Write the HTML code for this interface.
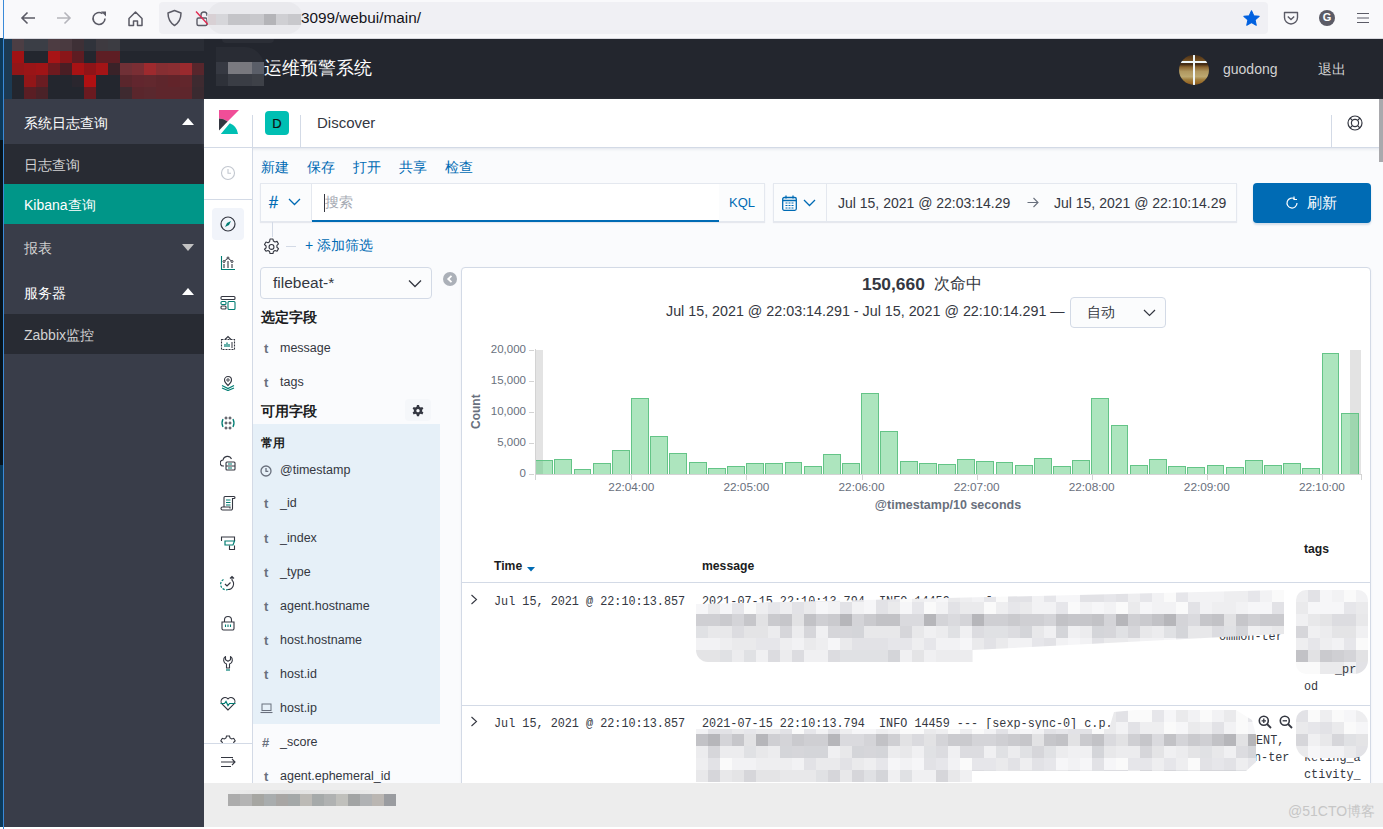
<!DOCTYPE html>
<html><head><meta charset="utf-8">
<style>
*{box-sizing:border-box;margin:0;padding:0}
html,body{width:1383px;height:829px;overflow:hidden;background:#fafbfd;font-family:"Liberation Sans",sans-serif;position:relative}
.a{position:absolute}
.t{position:absolute;white-space:pre;line-height:1}
/* browser bar */
#bb{left:0;top:0;width:1383px;height:39px;background:#f9f9fb;border-bottom:1px solid #d8d8de}
#url{left:159px;top:2px;width:1109px;height:32px;background:#f0f0f4;border-radius:4px}
/* header */
#hd{left:0;top:39px;width:1383px;height:60px;background:#23262e}
/* sidebar */
#sb{left:4px;top:99px;width:200px;height:730px;background:#393d49}
.si{position:absolute;left:0;width:200px;color:#fff;font-size:14px}
.si span{position:absolute;left:20px;top:50%;transform:translateY(calc(-50% + 1.5px));white-space:nowrap}
.caret{position:absolute;left:178px;width:0;height:0;border-left:6px solid transparent;border-right:6px solid transparent}
</style></head><body>
<div id="bb" class="a">
  <div id="url" class="a"></div>
  <svg class="a" style="left:19px;top:10px" width="18" height="16" viewBox="0 0 18 16"><path d="M16 8H3M8.5 2.5L3 8l5.5 5.5" fill="none" stroke="#5b5b66" stroke-width="1.6"/></svg>
  <svg class="a" style="left:55px;top:10px" width="18" height="16" viewBox="0 0 18 16"><path d="M2 8h13M9.5 2.5L15 8l-5.5 5.5" fill="none" stroke="#b5b5bb" stroke-width="1.6"/></svg>
  <svg class="a" style="left:91px;top:10px" width="17" height="17" viewBox="0 0 17 17"><path d="M14 8.5A6 6 0 1 1 11.5 3.6" fill="none" stroke="#5b5b66" stroke-width="1.6"/><path d="M10 1.5h5v5z" fill="#5b5b66"/></svg>
  <svg class="a" style="left:127px;top:10px" width="17" height="17" viewBox="0 0 17 17"><path d="M2 8.5L8.5 2 15 8.5V15.5H10.5V11H6.5V15.5H2z" fill="none" stroke="#5b5b66" stroke-width="1.5" stroke-linejoin="round"/></svg>
  <svg class="a" style="left:166px;top:9px" width="17" height="18" viewBox="0 0 17 18"><path d="M8.5 1.5L15 4c0 6-2.5 10-6.5 12.5C4.5 14 2 10 2 4z" fill="none" stroke="#5b5b66" stroke-width="1.5" stroke-linejoin="round"/></svg>
  <svg class="a" style="left:195px;top:10px" width="14" height="17" viewBox="0 0 14 17"><path d="M6 8V5a3 3 0 0 1 6 0v1" fill="none" stroke="#5b5b66" stroke-width="1.4"/><rect x="2" y="8" width="10" height="7.5" rx="1.5" fill="none" stroke="#5b5b66" stroke-width="1.4"/><path d="M1 1.5l12 13" stroke="#e22850" stroke-width="1.4"/></svg>
  <div class="a" style="left:207px;top:2px;width:96px;height:32px;border-radius:16px;background:#e9e9ed"></div>
  <div class="a" style="left:208px;top:14px;width:8px;height:11px;background:#d8d0d4"></div>
  <div class="a" style="left:216px;top:14px;width:12px;height:11px;background:#d6d6da"></div>
  <div class="a" style="left:228px;top:14px;width:22px;height:11px;background:#c4c4c8"></div>
  <div class="a" style="left:250px;top:14px;width:14px;height:11px;background:#c8c8cc"></div>
  <div class="a" style="left:264px;top:14px;width:12px;height:11px;background:#b4b4b8"></div>
  <div class="a" style="left:276px;top:14px;width:12px;height:11px;background:#cfcfd3"></div>
  <div class="a" style="left:288px;top:14px;width:13px;height:11px;background:#c8c8cc"></div>
  <div class="t" style="left:301px;top:10px;font-size:15.3px;color:#15141a">3099/webui/main/</div>
  <svg class="a" style="left:1243px;top:10px" width="17" height="16.5" viewBox="0 0 24 23"><path d="M12 1l3.2 7 7.6.8-5.7 5.1 1.6 7.5L12 17.6l-6.7 3.8 1.6-7.5L1.2 8.8l7.6-.8z" fill="#0061e0" stroke="#0061e0" stroke-width="1.5" stroke-linejoin="round"/></svg>
  <svg class="a" style="left:1283px;top:11px" width="16" height="15" viewBox="0 0 16 15"><path d="M1.5 1.5h13v5a6.5 6.5 0 0 1-13 0z" fill="none" stroke="#5b5b66" stroke-width="1.4" stroke-linejoin="round"/><path d="M4.8 5.5L8 8.5l3.2-3" fill="none" stroke="#5b5b66" stroke-width="1.4"/></svg>
  <div class="a" style="left:1319px;top:10px;width:16px;height:16px;border-radius:50%;background:#5b5b66"></div>
  <div class="t" style="left:1319px;top:12px;width:16px;text-align:center;font-size:11px;font-weight:bold;color:#fff">G</div>
  <div class="a" style="left:1357px;top:12.5px;width:12px;height:1.4px;background:#5b5b66;box-shadow:0 4.5px 0 #5b5b66,0 9px 0 #5b5b66"></div>
</div>
<div id="hd" class="a">
  <div class="a" style="left:0;top:0;width:12px;height:61px;background:#1c3a52"></div>
<div class="a" style="left:216px;top:8px;width:48px;height:39px;border-radius:0 22px 22px 0;background:#292c34"></div><div class="a" style="left:222px;top:0px;width:52px;height:4px;border-radius:0 0 20px 20px;background:#2b2e36"></div>
<div class="a" style="left:12px;top:0px;width:12px;height:12px;background:#4c3e44"></div>
<div class="a" style="left:24px;top:0px;width:12px;height:12px;background:#3b3e46"></div>
<div class="a" style="left:36px;top:0px;width:12px;height:12px;background:#3b3e46"></div>
<div class="a" style="left:48px;top:0px;width:12px;height:12px;background:#4d3c42"></div>
<div class="a" style="left:60px;top:0px;width:12px;height:12px;background:#4a3a40"></div>
<div class="a" style="left:72px;top:0px;width:12px;height:12px;background:#3e3036"></div>
<div class="a" style="left:84px;top:0px;width:12px;height:12px;background:#30333b"></div>
<div class="a" style="left:96px;top:0px;width:12px;height:12px;background:#3e3a40"></div>
<div class="a" style="left:108px;top:0px;width:12px;height:12px;background:#3c3c42"></div>
<div class="a" style="left:120px;top:0px;width:12px;height:12px;background:#2a2d35"></div>
<div class="a" style="left:132px;top:0px;width:12px;height:12px;background:#2a2d35"></div>
<div class="a" style="left:144px;top:0px;width:12px;height:12px;background:#2a2d35"></div>
<div class="a" style="left:156px;top:0px;width:12px;height:12px;background:#2a2d35"></div>
<div class="a" style="left:168px;top:0px;width:12px;height:12px;background:#2a2d35"></div>
<div class="a" style="left:180px;top:0px;width:12px;height:12px;background:#2a2d35"></div>
<div class="a" style="left:192px;top:0px;width:12px;height:12px;background:#2a2d35"></div>
<div class="a" style="left:12px;top:12px;width:12px;height:12px;background:#a01214"></div>
<div class="a" style="left:48px;top:12px;width:12px;height:12px;background:#a81416"></div>
<div class="a" style="left:60px;top:12px;width:12px;height:12px;background:#8a1619"></div>
<div class="a" style="left:72px;top:12px;width:12px;height:12px;background:#5e1c22"></div>
<div class="a" style="left:96px;top:12px;width:12px;height:12px;background:#5e1e24"></div>
<div class="a" style="left:108px;top:12px;width:12px;height:12px;background:#5e1e24"></div>
<div class="a" style="left:12px;top:24px;width:12px;height:12px;background:#921618"></div>
<div class="a" style="left:24px;top:24px;width:12px;height:12px;background:#9a1517"></div>
<div class="a" style="left:36px;top:24px;width:12px;height:12px;background:#a01416"></div>
<div class="a" style="left:48px;top:24px;width:12px;height:12px;background:#6e1a1f"></div>
<div class="a" style="left:60px;top:24px;width:12px;height:12px;background:#4a1e24"></div>
<div class="a" style="left:72px;top:24px;width:12px;height:12px;background:#a81214"></div>
<div class="a" style="left:84px;top:24px;width:12px;height:12px;background:#8e1418"></div>
<div class="a" style="left:96px;top:24px;width:12px;height:12px;background:#a41416"></div>
<div class="a" style="left:108px;top:24px;width:12px;height:12px;background:#3a2228"></div>
<div class="a" style="left:120px;top:24px;width:12px;height:12px;background:#703036"></div>
<div class="a" style="left:132px;top:24px;width:12px;height:12px;background:#7a2e34"></div>
<div class="a" style="left:144px;top:24px;width:12px;height:12px;background:#9e2a2e"></div>
<div class="a" style="left:156px;top:24px;width:12px;height:12px;background:#862e32"></div>
<div class="a" style="left:168px;top:24px;width:12px;height:12px;background:#8a2e32"></div>
<div class="a" style="left:180px;top:24px;width:12px;height:12px;background:#9a2a2e"></div>
<div class="a" style="left:192px;top:24px;width:12px;height:12px;background:#58262c"></div>
<div class="a" style="left:24px;top:36px;width:12px;height:12px;background:#921618"></div>
<div class="a" style="left:36px;top:36px;width:12px;height:12px;background:#6a1c22"></div>
<div class="a" style="left:72px;top:36px;width:12px;height:12px;background:#2a262e"></div>
<div class="a" style="left:84px;top:36px;width:12px;height:12px;background:#b01012"></div>
<div class="a" style="left:120px;top:36px;width:12px;height:12px;background:#5a262c"></div>
<div class="a" style="left:132px;top:36px;width:12px;height:12px;background:#62262e"></div>
<div class="a" style="left:144px;top:36px;width:12px;height:12px;background:#62282e"></div>
<div class="a" style="left:156px;top:36px;width:12px;height:12px;background:#5e262c"></div>
<div class="a" style="left:168px;top:36px;width:12px;height:12px;background:#62242a"></div>
<div class="a" style="left:180px;top:36px;width:12px;height:12px;background:#62262c"></div>
<div class="a" style="left:192px;top:36px;width:12px;height:12px;background:#3e2a30"></div>
<div class="a" style="left:24px;top:48px;width:12px;height:12px;background:#5a1e24"></div>
<div class="a" style="left:36px;top:48px;width:12px;height:12px;background:#4a2228"></div>
<div class="a" style="left:84px;top:48px;width:12px;height:12px;background:#6a1a20"></div>
<div class="a" style="left:120px;top:48px;width:12px;height:12px;background:#3e2a30"></div>
<div class="a" style="left:132px;top:48px;width:12px;height:12px;background:#5a262c"></div>
<div class="a" style="left:144px;top:48px;width:12px;height:12px;background:#5a282e"></div>
<div class="a" style="left:156px;top:48px;width:12px;height:12px;background:#5e262c"></div>
<div class="a" style="left:168px;top:48px;width:12px;height:12px;background:#5e262c"></div>
<div class="a" style="left:180px;top:48px;width:12px;height:12px;background:#5e262c"></div>
<div class="a" style="left:192px;top:48px;width:12px;height:12px;background:#3a2a30"></div>
<div class="a" style="left:216px;top:23px;width:12px;height:12px;background:#363942"></div>
<div class="a" style="left:228px;top:23px;width:12px;height:12px;background:#7a7a80"></div>
<div class="a" style="left:240px;top:23px;width:12px;height:12px;background:#78787e"></div>
<div class="a" style="left:252px;top:23px;width:12px;height:12px;background:#5a5e68"></div>
<div class="a" style="left:216px;top:35px;width:12px;height:12px;background:#2e3139"></div>
<div class="a" style="left:228px;top:35px;width:12px;height:12px;background:#3a3d45"></div>
<div class="a" style="left:240px;top:35px;width:12px;height:12px;background:#3a3d45"></div>
<div class="a" style="left:252px;top:35px;width:12px;height:12px;background:#3e4148"></div>
    <div class="t" style="left:264px;top:21px;font-size:17.6px;color:#fff">运维预警系统</div>
  <div class="a" style="left:1179px;top:16px;width:30px;height:30px;border-radius:50%;overflow:hidden;background:linear-gradient(180deg,#4a3018 0%,#7a5422 22%,#3a2410 30%,#8a6430 40%,#b09860 55%,#bca870 72%,#a08040 82%,#9a6a28 92%,#7a5420 100%)">
  <div class="a" style="left:14px;top:0;width:1.5px;height:30px;background:#eef6f8"></div>
  <div class="a" style="left:1px;top:6px;width:28px;height:1.5px;background:#eef6f8"></div>
</div>
  <div class="t" style="left:1223px;top:23px;font-size:14px;color:#d2d2d2">guodong</div>
  <div class="t" style="left:1318px;top:23px;font-size:14px;color:#d2d2d2">退出</div>
</div>
<div id="sb" class="a">
  <div class="si" style="top:0;height:45px"><span>系统日志查询</span><div class="caret" style="top:19px;border-bottom:7px solid #fff"></div></div>
  <div class="si" style="top:45px;height:40px;background:#282b33;color:#d2d2d2"><span>日志查询</span></div>
  <div class="si" style="top:85px;height:40px;background:#009688"><span>Kibana查询</span></div>
  <div class="si" style="top:125px;height:45px;color:#d2d2d2"><span>报表</span><div class="caret" style="top:20px;border-top:7px solid #c2c2c2"></div></div>
  <div class="si" style="top:170px;height:45px"><span>服务器</span><div class="caret" style="top:19px;border-bottom:7px solid #fff"></div></div>
  <div class="si" style="top:215px;height:40px;background:#282b33;color:#d2d2d2"><span>Zabbix监控</span></div>
</div>

<!-- KIBANA -->
<div class="a" style="left:204px;top:99px;width:1179px;height:684px;background:#fafbfd"></div>
<div class="a" style="left:204px;top:99px;width:1179px;height:49px;background:#fff;border-bottom:1px solid #d3dae6;box-shadow:0 1px 3px rgba(152,162,179,.25)"></div>
<div class="a" style="left:1379px;top:99px;width:4px;height:63px;background:#a9a9ad"></div>
<!-- logo -->
<svg class="a" style="left:219px;top:110px" width="20" height="24" viewBox="0 0 20 24">
  <path d="M0 0H20L8.6 11.6A13 13 0 0 0 0 8.5z" fill="#f04e98"/>
  <path d="M0 8.5A13 13 0 0 1 8.6 11.6L0 20.5z" fill="#343741"/>
  <path d="M1.8 24L10.8 13.3A13 13 0 0 1 19 24z" fill="#00bfb3"/>
</svg>
<div class="a" style="left:252px;top:115px;width:1px;height:32px;background:#d3dae6"></div>
<div class="a" style="left:265px;top:111px;width:24px;height:24px;border-radius:4px;background:#00bfb3"></div>
<div class="t" style="left:265px;top:117px;width:24px;text-align:center;font-size:13px;color:#111;-webkit-text-stroke:0.2px #111">D</div>
<div class="a" style="left:300px;top:115px;width:1px;height:32px;background:#d3dae6"></div>
<div class="t" style="left:317px;top:115px;font-size:15px;color:#343741">Discover</div>
<div class="a" style="left:1331px;top:115px;width:1px;height:32px;background:#d3dae6"></div>
<svg class="a" style="left:1347px;top:115px" width="16" height="16" viewBox="0 0 16 16"><circle cx="8" cy="8" r="7" fill="none" stroke="#343741" stroke-width="1.2"/><circle cx="8" cy="8" r="3.6" fill="none" stroke="#343741" stroke-width="1.2"/><path d="M3 3l2.4 2.4M13 3l-2.4 2.4M3 13l2.4-2.4M13 13l-2.4-2.4" stroke="#343741" stroke-width="1.2"/></svg>
<!-- left nav -->
<div class="a" style="left:204px;top:148px;width:49px;height:635px;background:#fff;border-right:1px solid #d3dae6"></div>
<div class="a" style="left:204px;top:199px;width:48px;height:1px;background:#d3dae6"></div>
<svg class="a" style="left:220px;top:165px" width="16" height="16" viewBox="0 0 16 16"><circle cx="8" cy="8" r="6.5" fill="none" stroke="#c2c7cf" stroke-width="1.1"/><path d="M8 4v4.3h3" fill="none" stroke="#c2c7cf" stroke-width="1.1"/></svg>
<div class="a" style="left:212px;top:208px;width:32px;height:32px;border-radius:4px;background:#f1f4fa"></div>
<svg class="a" style="left:220px;top:216px" width="16" height="16" viewBox="0 0 16 16"><circle cx="8" cy="8" r="7" fill="none" stroke="#343741" stroke-width="1.2"/><path d="M11 5L9 9 5 11 7 7z" fill="#017d73"/></svg>
<svg class="a" style="left:220px;top:255px" width="16" height="16" viewBox="0 0 16 16"><path d="M1.5 1v13.5H15" fill="none" stroke="#017d73" stroke-width="1.1"/><path d="M4 13V9M8 13V6M12 13V9" stroke="#343741" stroke-width="1.1"/><path d="M4 6.5L8 3l4 3.5" fill="none" stroke="#343741" stroke-width="1"/><circle cx="4" cy="6.5" r="1" fill="#fff" stroke="#343741"/><circle cx="8" cy="3" r="1" fill="#fff" stroke="#343741"/><circle cx="12" cy="6.5" r="1" fill="#fff" stroke="#343741"/></svg>
<svg class="a" style="left:220px;top:295px" width="16" height="16" viewBox="0 0 16 16"><rect x="1" y="1.5" width="14" height="3" rx="1" fill="none" stroke="#343741" stroke-width="1.1"/><rect x="1" y="6.5" width="5" height="3" rx="1" fill="none" stroke="#017d73" stroke-width="1.1"/><rect x="1" y="11" width="5" height="3" rx="1" fill="none" stroke="#343741" stroke-width="1.1"/><rect x="8" y="6.5" width="7" height="8" rx="1" fill="none" stroke="#017d73" stroke-width="1.1"/></svg>
<svg class="a" style="left:220px;top:335px" width="16" height="16" viewBox="0 0 16 16"><path d="M1.5 4.5h13v10h-13z" fill="none" stroke="#343741" stroke-width="1.1" stroke-dasharray="2 1"/><path d="M5 4.5L8 1.5l3 3" fill="none" stroke="#343741" stroke-width="1.1"/><path d="M5 12V9M7 12V7.5M9 12V9" stroke="#017d73" stroke-width="1.2"/><path d="M11 8h2M11 10h2M11 12h2" stroke="#343741" stroke-width="1"/></svg>
<svg class="a" style="left:220px;top:375px" width="16" height="16" viewBox="0 0 16 16"><path d="M8 1.5a3.5 3.5 0 0 1 3.5 3.5C11.5 7.5 8 10.5 8 10.5S4.5 7.5 4.5 5A3.5 3.5 0 0 1 8 1.5z" fill="none" stroke="#343741" stroke-width="1.1"/><circle cx="8" cy="5" r="1.2" fill="none" stroke="#343741"/><path d="M2 10.5l6 3 6-3M2 13l6 2.5 6-2.5" fill="none" stroke="#017d73" stroke-width="1.2"/></svg>
<svg class="a" style="left:220px;top:415px" width="16" height="16" viewBox="0 0 16 16"><circle cx="6" cy="3" r="1" fill="none" stroke="#343741"/><circle cx="10" cy="3" r="1" fill="none" stroke="#343741"/><circle cx="6" cy="8" r="1" fill="none" stroke="#343741"/><circle cx="10" cy="8" r="1" fill="none" stroke="#343741"/><circle cx="6" cy="13" r="1" fill="none" stroke="#343741"/><circle cx="10" cy="13" r="1" fill="none" stroke="#343741"/><path d="M3 4Q1 8 3 12M13 4q2 4 0 8" fill="none" stroke="#017d73" stroke-width="1.3"/></svg>
<svg class="a" style="left:220px;top:455px" width="16" height="16" viewBox="0 0 16 16"><path d="M4 11H3.5a3 3 0 0 1-.5-6 4.5 4.5 0 0 1 8.5-1" fill="none" stroke="#343741" stroke-width="1.1"/><rect x="6" y="7" width="9" height="8" rx="1" fill="none" stroke="#343741" stroke-width="1.1"/><path d="M6 11h9" stroke="#343741" stroke-width="1"/><path d="M8 9h4M8 13h4" stroke="#017d73" stroke-width="1.1"/></svg>
<svg class="a" style="left:220px;top:495px" width="16" height="16" viewBox="0 0 16 16"><path d="M4 12.5V2.5a1 1 0 0 1 1-1h9a1 1 0 0 1 0 2h-1.5v10a1.5 1.5 0 0 1-1.5 1.5H2.5a1.5 1.5 0 0 1 0-3H10v1.5" fill="none" stroke="#343741" stroke-width="1.1"/><path d="M6 5h4.5M6 7.5h4.5M6 10h4.5" stroke="#017d73" stroke-width="1.1"/></svg>
<svg class="a" style="left:220px;top:535px" width="16" height="16" viewBox="0 0 16 16"><path d="M1.5 6V2h13v4" fill="none" stroke="#343741" stroke-width="1.1"/><path d="M5 6h9.5l-1.5 4H5z" fill="none" stroke="#017d73" stroke-width="1.2"/><path d="M9.5 10.5v4h5v-4" fill="none" stroke="#343741" stroke-width="1.1"/></svg>
<svg class="a" style="left:220px;top:575px" width="16" height="16" viewBox="0 0 16 16"><path d="M3.5 4.5A5.5 5.5 0 0 0 8 14.5" fill="none" stroke="#017d73" stroke-width="1.2" stroke-dasharray="2.2 1.3"/><path d="M8 14.5a5.5 5.5 0 0 0 4-9.3V1.5M10 3.5l2-2 2 2" fill="none" stroke="#343741" stroke-width="1.1"/><path d="M5 9l2 2 3.5-3.5" fill="none" stroke="#343741" stroke-width="1.2"/></svg>
<svg class="a" style="left:220px;top:615px" width="16" height="16" viewBox="0 0 16 16"><path d="M4.5 7V5a3.5 3.5 0 0 1 7 0v2" fill="none" stroke="#343741" stroke-width="1.1"/><path d="M2 7h12v6.5a1.5 1.5 0 0 1-1.5 1.5h-9A1.5 1.5 0 0 1 2 13.5z" fill="none" stroke="#343741" stroke-width="1.1"/><path d="M5.5 9.5v2.5M8 9.5v2.5M10.5 9.5v2.5" stroke="#017d73" stroke-width="1.1"/></svg>
<svg class="a" style="left:220px;top:655px" width="16" height="16" viewBox="0 0 16 16"><path d="M5.5 1.5v3.2L8 6.2l2.5-1.5V1.5a4.3 4.3 0 0 1-1 7.6V13h-3V9.1a4.3 4.3 0 0 1-1-7.6z" fill="none" stroke="#343741" stroke-width="1.1" stroke-linejoin="round"/><path d="M6 15h4" stroke="#017d73" stroke-width="1.2"/></svg>
<svg class="a" style="left:220px;top:695px" width="16" height="16" viewBox="0 0 16 16"><path d="M8 15L2 9a3.5 3.5 0 0 1 6-5 3.5 3.5 0 0 1 6 5z" fill="none" stroke="#343741" stroke-width="1.1"/><path d="M0.5 8.5h4l1.5-2 2 4 1.5-2h6" fill="none" stroke="#017d73" stroke-width="1.2"/></svg>
<div class="a" style="left:204px;top:734px;width:48px;height:9px;overflow:hidden"><svg class="a" style="left:16px;top:1px" width="16" height="16" viewBox="0 0 16 16"><path d="M6.5 1h3l.5 2 1.7 1 2-.7 1.5 2.6-1.5 1.4v1.4l1.5 1.4-1.5 2.6-2-.7-1.7 1-.5 2h-3l-.5-2-1.7-1-2 .7L.8 10.1l1.5-1.4V7.3L.8 5.9l1.5-2.6 2 .7 1.7-1z" fill="none" stroke="#343741" stroke-width="1.1"/><path d="M6 9h4" stroke="#017d73"/></svg></div>
<div class="a" style="left:204px;top:743px;width:48px;height:40px;background:#fff;border-top:1px solid #d3dae6"></div>
<svg class="a" style="left:220px;top:755px" width="16" height="14" viewBox="0 0 16 14"><path d="M1 2.5h12M1 7h14M1 11.5h10M12 4l3 3-3 3" fill="none" stroke="#343741" stroke-width="1.1"/></svg>

<!-- top menu -->
<div class="t" style="left:261px;top:160px;font-size:14px;color:#006bb4">新建</div>
<div class="t" style="left:307px;top:160px;font-size:14px;color:#006bb4">保存</div>
<div class="t" style="left:353px;top:160px;font-size:14px;color:#006bb4">打开</div>
<div class="t" style="left:399px;top:160px;font-size:14px;color:#006bb4">共享</div>
<div class="t" style="left:445px;top:160px;font-size:14px;color:#006bb4">检查</div>
<!-- query bar -->
<div class="a" style="left:260px;top:183px;width:505px;height:39px;background:#fbfcfd;border:1px solid #e4e8ef;box-shadow:0 1px 1px rgba(152,162,179,.2)"></div>
<div class="t" style="left:269px;top:195px;font-size:16px;color:#006bb4;-webkit-text-stroke:0.3px #006bb4">#</div>
<svg class="a" style="left:288px;top:198px" width="13" height="8" viewBox="0 0 13 8"><path d="M1 1l5.5 5.5L12 1" fill="none" stroke="#006bb4" stroke-width="1.3"/></svg>
<div class="a" style="left:311px;top:184px;width:1px;height:37px;background:#e4e8ef"></div>
<div class="a" style="left:312px;top:184px;width:407px;height:38px;background:#fff;border-bottom:2px solid #006bb4"></div>
<div class="a" style="left:324px;top:194px;width:1px;height:18px;background:#343741"></div>
<div class="t" style="left:325px;top:195px;font-size:14px;color:#a5aab3">搜索</div>
<div class="t" style="left:729px;top:196px;font-size:13px;color:#006bb4">KQL</div>
<!-- date picker -->
<div class="a" style="left:773px;top:183px;width:464px;height:39px;background:#fbfcfd;border:1px solid #e4e8ef;box-shadow:0 1px 1px rgba(152,162,179,.2)"></div>
<div class="a" style="left:826px;top:184px;width:1px;height:37px;background:#e4e8ef"></div>
<svg class="a" style="left:782px;top:195px" width="15" height="16" viewBox="0 0 15 16"><rect x="0.7" y="2.5" width="13.6" height="12.8" rx="1.5" fill="none" stroke="#006bb4" stroke-width="1.3"/><path d="M1 5.5h13M4 0.5v3M11 0.5v3" stroke="#006bb4" stroke-width="1.3"/><path d="M3.5 8h2M6.5 8h2M9.5 8h2M3.5 10.5h2M6.5 10.5h2M9.5 10.5h2M3.5 13h2M6.5 13h2M9.5 13h2" stroke="#006bb4" stroke-width="1.1"/></svg>
<svg class="a" style="left:803px;top:199px" width="13" height="8" viewBox="0 0 13 8"><path d="M1 1l5.5 5.5L12 1" fill="none" stroke="#006bb4" stroke-width="1.3"/></svg>
<div class="t" style="left:838px;top:196px;font-size:14px;color:#343741">Jul 15, 2021 @ 22:03:14.29</div>
<svg class="a" style="left:1027px;top:197px" width="12" height="11" viewBox="0 0 12 11"><path d="M0.5 5.5h10.5M6.5 1l4.5 4.5L6.5 10" fill="none" stroke="#69707d" stroke-width="1.1"/></svg>
<div class="t" style="left:1054px;top:196px;font-size:14px;color:#343741">Jul 15, 2021 @ 22:10:14.29</div>
<!-- refresh -->
<div class="a" style="left:1253px;top:183px;width:118px;height:40px;border-radius:4px;background:#006bb4;box-shadow:0 2px 2px rgba(0,60,120,.15)"></div>
<svg class="a" style="left:1285px;top:196px" width="14" height="14" viewBox="0 0 14 14"><path d="M12 7A5 5 0 1 1 9.5 2.7" fill="none" stroke="#fff" stroke-width="1.2"/><path d="M9 0.5v3h3" fill="none" stroke="#fff" stroke-width="1.2"/></svg>
<div class="t" style="left:1307px;top:195px;font-size:15px;color:#fff">刷新</div>
<!-- filter row -->
<div class="a" style="left:272px;top:222px;width:1px;height:15px;background:#d3dae6"></div>
<svg class="a" style="left:263px;top:238px" width="17" height="17" viewBox="0 0 16 16"><path d="M6.6 1h2.8l.4 1.9 1.5.9 1.9-.6 1.4 2.4-1.5 1.3v1.8l1.5 1.3-1.4 2.4-1.9-.6-1.5.9-.4 1.9H6.6l-.4-1.9-1.5-.9-1.9.6L1.4 10.6l1.5-1.3V7.5L1.4 6.2l1.4-2.4 1.9.6 1.5-.9z" fill="none" stroke="#343741" stroke-width="1.05" stroke-linejoin="round"/><circle cx="8" cy="8.4" r="2.3" fill="none" stroke="#343741" stroke-width="1.05"/></svg>
<div class="a" style="left:286px;top:246px;width:10px;height:1px;background:#d3dae6"></div>
<div class="t" style="left:305px;top:238px;font-size:14px;color:#006bb4">+ 添加筛选</div>
<!-- index pattern -->
<div class="a" style="left:260px;top:267px;width:172px;height:32px;border:1px solid #d3dae6;border-radius:4px;background:#fbfcfd"></div>
<div class="t" style="left:273px;top:275px;font-size:15.5px;color:#343741">filebeat-*</div>
<svg class="a" style="left:408px;top:279px" width="14" height="9" viewBox="0 0 14 9"><path d="M1 1.5l6 6 6-6" fill="none" stroke="#343741" stroke-width="1.3"/></svg>
<div class="a" style="left:443px;top:272px;width:14px;height:14px;border-radius:50%;background:#abb0b8"></div>
<svg class="a" style="left:446px;top:275px" width="8" height="8" viewBox="0 0 8 8"><path d="M5.5 0.8L2.2 4l3.3 3.2" fill="none" stroke="#fff" stroke-width="1.8"/></svg>

<div class="t" style="left:261px;top:310px;font-size:14px;font-weight:bold;color:#1a1c21">选定字段</div>
<div class="t" style="left:261px;top:404px;font-size:14px;font-weight:bold;color:#1a1c21">可用字段</div>
<div class="a" style="left:405px;top:399px;width:26px;height:22px;border-radius:4px;background:#f5f7fa"></div>
<svg class="a" style="left:412px;top:405px" width="12" height="12" viewBox="0 0 16 16"><path d="M6.6 0h2.8l.5 2.2 1.8 1 2.1-.7 1.4 2.4-1.7 1.5v2.2l1.7 1.5-1.4 2.4-2.1-.7-1.8 1-.5 2.2H6.6l-.5-2.2-1.8-1-2.1.7L.8 10.1l1.7-1.5V6.4L.8 4.9l1.4-2.4 2.1.7 1.8-1z" fill="#343741"/><circle cx="8" cy="7.5" r="2.2" fill="#fafbfd"/></svg>
<div class="a" style="left:253px;top:424px;width:187px;height:300px;background:#e6f0f8"></div>
<div class="t" style="left:261px;top:437px;font-size:12px;font-weight:bold;color:#1a1c21">常用</div>
<div class="t" style="left:264px;top:342px;font-size:13px;font-weight:bold;color:#69707d">t</div>
<div class="t" style="left:280px;top:342px;font-size:12.5px;color:#343741">message</div>
<div class="t" style="left:264px;top:376px;font-size:13px;font-weight:bold;color:#69707d">t</div>
<div class="t" style="left:280px;top:376px;font-size:12.5px;color:#343741">tags</div>
<svg class="a" style="left:260px;top:465px" width="12" height="12" viewBox="0 0 12 12"><circle cx="6" cy="6" r="5" fill="none" stroke="#69707d" stroke-width="1.3"/><path d="M6 3v3.3H8.3" fill="none" stroke="#69707d" stroke-width="1.3"/></svg>
<div class="t" style="left:280px;top:464px;font-size:12.5px;color:#343741">@timestamp</div>
<div class="t" style="left:264px;top:497px;font-size:13px;font-weight:bold;color:#69707d">t</div>
<div class="t" style="left:280px;top:497px;font-size:12.5px;color:#343741">_id</div>
<div class="t" style="left:264px;top:532px;font-size:13px;font-weight:bold;color:#69707d">t</div>
<div class="t" style="left:280px;top:532px;font-size:12.5px;color:#343741">_index</div>
<div class="t" style="left:264px;top:566px;font-size:13px;font-weight:bold;color:#69707d">t</div>
<div class="t" style="left:280px;top:566px;font-size:12.5px;color:#343741">_type</div>
<div class="t" style="left:264px;top:600px;font-size:13px;font-weight:bold;color:#69707d">t</div>
<div class="t" style="left:280px;top:600px;font-size:12.5px;color:#343741">agent.hostname</div>
<div class="t" style="left:264px;top:634px;font-size:13px;font-weight:bold;color:#69707d">t</div>
<div class="t" style="left:280px;top:634px;font-size:12.5px;color:#343741">host.hostname</div>
<div class="t" style="left:264px;top:668px;font-size:13px;font-weight:bold;color:#69707d">t</div>
<div class="t" style="left:280px;top:668px;font-size:12.5px;color:#343741">host.id</div>
<svg class="a" style="left:260px;top:703px" width="13" height="11" viewBox="0 0 13 11"><rect x="2" y="1" width="9" height="6.5" fill="none" stroke="#69707d" stroke-width="1"/><path d="M0.5 9.5h12" stroke="#69707d" stroke-width="1.1"/></svg>
<div class="t" style="left:280px;top:702px;font-size:12.5px;color:#343741">host.ip</div>
<div class="t" style="left:262px;top:736px;font-size:13px;font-weight:bold;color:#69707d">#</div>
<div class="t" style="left:280px;top:736px;font-size:12.5px;color:#343741">_score</div>
<div class="t" style="left:264px;top:770px;font-size:13px;font-weight:bold;color:#69707d">t</div>
<div class="t" style="left:280px;top:770px;font-size:12.5px;color:#343741">agent.ephemeral_id</div>
<div class="a" style="left:461px;top:267px;width:910px;height:540px;background:#fff;border:1px solid #d3dae6;border-radius:4px;box-shadow:0 1px 2px rgba(152,162,179,.15)"></div>
<div class="t" style="left:862px;top:276px;font-size:17.4px;font-weight:bold;color:#343741">150,660</div>
<div class="t" style="left:934px;top:276px;font-size:16px;color:#343741">次命中</div>
<div class="t" style="left:666px;top:304px;font-size:14.3px;color:#343741">Jul 15, 2021 @ 22:03:14.291 - Jul 15, 2021 @ 22:10:14.291 —</div>
<div class="a" style="left:1070px;top:297px;width:96px;height:31px;border:1px solid #d3dae6;border-radius:4px;background:#fbfcfd"></div>
<div class="t" style="left:1087px;top:305px;font-size:14px;color:#343741">自动</div>
<svg class="a" style="left:1143px;top:309px" width="13" height="8" viewBox="0 0 13 8"><path d="M1 1l5.5 5.5L12 1" fill="none" stroke="#343741" stroke-width="1.2"/></svg>
<div class="t" style="left:460px;width:66px;text-align:right;top:344px;font-size:11.5px;color:#69707d">20,000</div>
<div class="a" style="left:529px;top:350px;width:5px;height:1px;background:#d3d3d3"></div>
<div class="t" style="left:460px;width:66px;text-align:right;top:375px;font-size:11.5px;color:#69707d">15,000</div>
<div class="a" style="left:529px;top:381px;width:5px;height:1px;background:#d3d3d3"></div>
<div class="t" style="left:460px;width:66px;text-align:right;top:406px;font-size:11.5px;color:#69707d">10,000</div>
<div class="a" style="left:529px;top:412px;width:5px;height:1px;background:#d3d3d3"></div>
<div class="t" style="left:460px;width:66px;text-align:right;top:437px;font-size:11.5px;color:#69707d">5,000</div>
<div class="a" style="left:529px;top:443px;width:5px;height:1px;background:#d3d3d3"></div>
<div class="t" style="left:460px;width:66px;text-align:right;top:468px;font-size:11.5px;color:#69707d">0</div>
<div class="a" style="left:529px;top:474px;width:5px;height:1px;background:#d3d3d3"></div>
<div class="t" style="left:470px;top:429px;transform:rotate(-90deg);transform-origin:0 0;font-size:12px;font-weight:bold;color:#69707d">Count</div>
<div class="a" style="left:535px;top:350px;width:8px;height:124px;background:#e3e3e3"></div>
<div class="a" style="left:1350px;top:350px;width:11px;height:124px;background:#e3e3e3"></div>
<div class="a" style="left:535.20px;top:459.7px;width:17.9px;height:14.3px;background:rgba(84,200,120,.48);border:1.2px solid #64c487;border-bottom:none"></div>
<div class="a" style="left:554.38px;top:459.3px;width:17.9px;height:14.7px;background:rgba(84,200,120,.48);border:1.2px solid #64c487;border-bottom:none"></div>
<div class="a" style="left:573.56px;top:469.3px;width:17.9px;height:4.7px;background:rgba(84,200,120,.48);border:1.2px solid #64c487;border-bottom:none"></div>
<div class="a" style="left:592.74px;top:463.3px;width:17.9px;height:10.7px;background:rgba(84,200,120,.48);border:1.2px solid #64c487;border-bottom:none"></div>
<div class="a" style="left:611.92px;top:449.7px;width:17.9px;height:24.3px;background:rgba(84,200,120,.48);border:1.2px solid #64c487;border-bottom:none"></div>
<div class="a" style="left:631.10px;top:398.0px;width:17.9px;height:76.0px;background:rgba(84,200,120,.48);border:1.2px solid #64c487;border-bottom:none"></div>
<div class="a" style="left:650.28px;top:436.4px;width:17.9px;height:37.6px;background:rgba(84,200,120,.48);border:1.2px solid #64c487;border-bottom:none"></div>
<div class="a" style="left:669.46px;top:453.3px;width:17.9px;height:20.7px;background:rgba(84,200,120,.48);border:1.2px solid #64c487;border-bottom:none"></div>
<div class="a" style="left:688.64px;top:462.3px;width:17.9px;height:11.7px;background:rgba(84,200,120,.48);border:1.2px solid #64c487;border-bottom:none"></div>
<div class="a" style="left:707.82px;top:467.6px;width:17.9px;height:6.4px;background:rgba(84,200,120,.48);border:1.2px solid #64c487;border-bottom:none"></div>
<div class="a" style="left:727.00px;top:466.3px;width:17.9px;height:7.7px;background:rgba(84,200,120,.48);border:1.2px solid #64c487;border-bottom:none"></div>
<div class="a" style="left:746.18px;top:463.3px;width:17.9px;height:10.7px;background:rgba(84,200,120,.48);border:1.2px solid #64c487;border-bottom:none"></div>
<div class="a" style="left:765.36px;top:463.3px;width:17.9px;height:10.7px;background:rgba(84,200,120,.48);border:1.2px solid #64c487;border-bottom:none"></div>
<div class="a" style="left:784.54px;top:462.3px;width:17.9px;height:11.7px;background:rgba(84,200,120,.48);border:1.2px solid #64c487;border-bottom:none"></div>
<div class="a" style="left:803.72px;top:466.0px;width:17.9px;height:8.0px;background:rgba(84,200,120,.48);border:1.2px solid #64c487;border-bottom:none"></div>
<div class="a" style="left:822.90px;top:454.3px;width:17.9px;height:19.7px;background:rgba(84,200,120,.48);border:1.2px solid #64c487;border-bottom:none"></div>
<div class="a" style="left:842.08px;top:463.0px;width:17.9px;height:11.0px;background:rgba(84,200,120,.48);border:1.2px solid #64c487;border-bottom:none"></div>
<div class="a" style="left:861.26px;top:392.5px;width:17.9px;height:81.5px;background:rgba(84,200,120,.48);border:1.2px solid #64c487;border-bottom:none"></div>
<div class="a" style="left:880.44px;top:431.1px;width:17.9px;height:42.9px;background:rgba(84,200,120,.48);border:1.2px solid #64c487;border-bottom:none"></div>
<div class="a" style="left:899.62px;top:460.5px;width:17.9px;height:13.5px;background:rgba(84,200,120,.48);border:1.2px solid #64c487;border-bottom:none"></div>
<div class="a" style="left:918.80px;top:463.1px;width:17.9px;height:10.9px;background:rgba(84,200,120,.48);border:1.2px solid #64c487;border-bottom:none"></div>
<div class="a" style="left:937.98px;top:464.2px;width:17.9px;height:9.8px;background:rgba(84,200,120,.48);border:1.2px solid #64c487;border-bottom:none"></div>
<div class="a" style="left:957.16px;top:458.9px;width:17.9px;height:15.1px;background:rgba(84,200,120,.48);border:1.2px solid #64c487;border-bottom:none"></div>
<div class="a" style="left:976.34px;top:461.4px;width:17.9px;height:12.6px;background:rgba(84,200,120,.48);border:1.2px solid #64c487;border-bottom:none"></div>
<div class="a" style="left:995.52px;top:461.7px;width:17.9px;height:12.3px;background:rgba(84,200,120,.48);border:1.2px solid #64c487;border-bottom:none"></div>
<div class="a" style="left:1014.70px;top:465.2px;width:17.9px;height:8.8px;background:rgba(84,200,120,.48);border:1.2px solid #64c487;border-bottom:none"></div>
<div class="a" style="left:1033.88px;top:458.2px;width:17.9px;height:15.8px;background:rgba(84,200,120,.48);border:1.2px solid #64c487;border-bottom:none"></div>
<div class="a" style="left:1053.06px;top:466.2px;width:17.9px;height:7.8px;background:rgba(84,200,120,.48);border:1.2px solid #64c487;border-bottom:none"></div>
<div class="a" style="left:1072.24px;top:459.6px;width:17.9px;height:14.4px;background:rgba(84,200,120,.48);border:1.2px solid #64c487;border-bottom:none"></div>
<div class="a" style="left:1091.42px;top:397.5px;width:17.9px;height:76.5px;background:rgba(84,200,120,.48);border:1.2px solid #64c487;border-bottom:none"></div>
<div class="a" style="left:1110.60px;top:425.4px;width:17.9px;height:48.6px;background:rgba(84,200,120,.48);border:1.2px solid #64c487;border-bottom:none"></div>
<div class="a" style="left:1129.78px;top:464.9px;width:17.9px;height:9.1px;background:rgba(84,200,120,.48);border:1.2px solid #64c487;border-bottom:none"></div>
<div class="a" style="left:1148.96px;top:459.3px;width:17.9px;height:14.7px;background:rgba(84,200,120,.48);border:1.2px solid #64c487;border-bottom:none"></div>
<div class="a" style="left:1168.14px;top:465.9px;width:17.9px;height:8.1px;background:rgba(84,200,120,.48);border:1.2px solid #64c487;border-bottom:none"></div>
<div class="a" style="left:1187.32px;top:467.0px;width:17.9px;height:7.0px;background:rgba(84,200,120,.48);border:1.2px solid #64c487;border-bottom:none"></div>
<div class="a" style="left:1206.50px;top:465.2px;width:17.9px;height:8.8px;background:rgba(84,200,120,.48);border:1.2px solid #64c487;border-bottom:none"></div>
<div class="a" style="left:1225.68px;top:467.3px;width:17.9px;height:6.7px;background:rgba(84,200,120,.48);border:1.2px solid #64c487;border-bottom:none"></div>
<div class="a" style="left:1244.86px;top:459.6px;width:17.9px;height:14.4px;background:rgba(84,200,120,.48);border:1.2px solid #64c487;border-bottom:none"></div>
<div class="a" style="left:1264.04px;top:465.2px;width:17.9px;height:8.8px;background:rgba(84,200,120,.48);border:1.2px solid #64c487;border-bottom:none"></div>
<div class="a" style="left:1283.22px;top:463.1px;width:17.9px;height:10.9px;background:rgba(84,200,120,.48);border:1.2px solid #64c487;border-bottom:none"></div>
<div class="a" style="left:1302.40px;top:468.4px;width:17.9px;height:5.6px;background:rgba(84,200,120,.48);border:1.2px solid #64c487;border-bottom:none"></div>
<div class="a" style="left:1321.58px;top:353.1px;width:17.9px;height:120.9px;background:rgba(84,200,120,.48);border:1.2px solid #64c487;border-bottom:none"></div>
<div class="a" style="left:1340.76px;top:413.2px;width:17.9px;height:60.8px;background:rgba(84,200,120,.48);border:1.2px solid #64c487;border-bottom:none"></div>
<div class="a" style="left:535px;top:474px;width:826px;height:1px;background:#d3d3d3"></div>
<div class="a" style="left:535px;top:349px;width:1px;height:125px;background:#d3d3d3"></div>
<div class="a" style="left:535px;top:474px;width:1px;height:6px;background:#d3d3d3"></div>
<div class="a" style="left:1361px;top:474px;width:1px;height:6px;background:#d3d3d3"></div>
<div class="a" style="left:631.3px;top:474px;width:1px;height:6px;background:#d3d3d3"></div>
<div class="t" style="left:601.3px;width:60px;text-align:center;top:482px;font-size:11.8px;color:#69707d">22:04:00</div>
<div class="a" style="left:746.4px;top:474px;width:1px;height:6px;background:#d3d3d3"></div>
<div class="t" style="left:716.4px;width:60px;text-align:center;top:482px;font-size:11.8px;color:#69707d">22:05:00</div>
<div class="a" style="left:861.5px;top:474px;width:1px;height:6px;background:#d3d3d3"></div>
<div class="t" style="left:831.5px;width:60px;text-align:center;top:482px;font-size:11.8px;color:#69707d">22:06:00</div>
<div class="a" style="left:976.6px;top:474px;width:1px;height:6px;background:#d3d3d3"></div>
<div class="t" style="left:946.6px;width:60px;text-align:center;top:482px;font-size:11.8px;color:#69707d">22:07:00</div>
<div class="a" style="left:1091.7px;top:474px;width:1px;height:6px;background:#d3d3d3"></div>
<div class="t" style="left:1061.7px;width:60px;text-align:center;top:482px;font-size:11.8px;color:#69707d">22:08:00</div>
<div class="a" style="left:1206.8px;top:474px;width:1px;height:6px;background:#d3d3d3"></div>
<div class="t" style="left:1176.8px;width:60px;text-align:center;top:482px;font-size:11.8px;color:#69707d">22:09:00</div>
<div class="a" style="left:1321.9px;top:474px;width:1px;height:6px;background:#d3d3d3"></div>
<div class="t" style="left:1291.9px;width:60px;text-align:center;top:482px;font-size:11.8px;color:#69707d">22:10:00</div>
<div class="t" style="left:848px;width:200px;text-align:center;top:499px;font-size:12.5px;font-weight:bold;color:#69707d">@timestamp/10 seconds</div>
<div class="t" style="left:494px;top:560px;font-size:12.2px;font-weight:bold;color:#1a1c21">Time</div>
<svg class="a" style="left:527px;top:567px" width="8" height="5" viewBox="0 0 8 5"><path d="M0 0h8L4 4.5z" fill="#006bb4"/></svg>
<div class="t" style="left:702px;top:560px;font-size:12.2px;font-weight:bold;color:#1a1c21">message</div>
<div class="t" style="left:1304px;top:543px;font-size:12.2px;font-weight:bold;color:#1a1c21">tags</div>
<div class="a" style="left:462px;top:582px;width:908px;height:1px;background:#d3dae6"></div>
<div class="a" style="left:462px;top:705px;width:908px;height:1px;background:#d3dae6"></div>
<svg class="a" style="left:470px;top:594px" width="8" height="11" viewBox="0 0 8 11"><path d="M1.5 1l5 4.5-5 4.5" fill="none" stroke="#343741" stroke-width="1.1"/></svg>
<div class="t" style="left:494px;top:597px;font-family:'Liberation Mono',monospace;font-size:11.8px;color:#343741;transform:scaleY(1.14);transform-origin:0 60%">Jul 15, 2021 @ 22:10:13.857</div>
<svg class="a" style="left:470px;top:716px" width="8" height="11" viewBox="0 0 8 11"><path d="M1.5 1l5 4.5-5 4.5" fill="none" stroke="#343741" stroke-width="1.1"/></svg>
<div class="t" style="left:494px;top:719px;font-family:'Liberation Mono',monospace;font-size:11.8px;color:#343741;transform:scaleY(1.14);transform-origin:0 60%">Jul 15, 2021 @ 22:10:13.857</div>
<div class="t" style="left:702px;top:597px;font-family:'Liberation Mono',monospace;font-size:11.8px;color:#343741;transform:scaleY(1.14);transform-origin:0 60%">2021-07-15 22:10:13.794  INFO 14459 --- [sexp-sync-6] c.p.</div>
<div class="t" style="left:702px;top:719px;font-family:'Liberation Mono',monospace;font-size:11.8px;color:#343741;transform:scaleY(1.14);transform-origin:0 60%">2021-07-15 22:10:13.794  INFO 14459 --- [sexp-sync-0] c.p.</div>
<div class="t" style="left:1219px;top:632px;font-family:'Liberation Mono',monospace;font-size:11.8px;color:#343741;transform:scaleY(1.14);transform-origin:0 60%">ommon-ter</div>
<div class="t" style="left:1304px;top:682px;font-family:'Liberation Mono',monospace;font-size:11.8px;color:#343741;transform:scaleY(1.14);transform-origin:0 60%">od</div>
<div class="t" style="left:1256px;top:736px;font-family:'Liberation Mono',monospace;font-size:11.8px;color:#343741;transform:scaleY(1.14);transform-origin:0 60%">ENT,</div>
<div class="t" style="left:1254px;top:753px;font-family:'Liberation Mono',monospace;font-size:11.8px;color:#343741;transform:scaleY(1.14);transform-origin:0 60%">n-ter</div>
<div class="t" style="left:1304px;top:753px;font-family:'Liberation Mono',monospace;font-size:11.8px;color:#343741;transform:scaleY(1.14);transform-origin:0 60%">keting_a</div>
<div class="t" style="left:1304px;top:770px;font-family:'Liberation Mono',monospace;font-size:11.8px;color:#343741;transform:scaleY(1.14);transform-origin:0 60%">ctivity_</div>
<div class="t" style="left:702px;top:770px;font-family:'Liberation Mono',monospace;font-size:11.8px;color:#343741;transform:scaleY(1.14);transform-origin:0 60%">min</div>
<div class="a" style="left:696px;top:590px;width:588px;height:72px;overflow:hidden;clip-path:polygon(0 14px,100% 0,100% 44px,47% 60px,47% 72px,0 72px);border-radius:0 0 0 12px;"><div class="a" style="left:0px;top:0px;width:12px;height:12px;background:#f6f6f8"></div><div class="a" style="left:12px;top:0px;width:12px;height:12px;background:#fafafa"></div><div class="a" style="left:24px;top:0px;width:12px;height:12px;background:#e6e6ea"></div><div class="a" style="left:36px;top:0px;width:12px;height:12px;background:#fafafa"></div><div class="a" style="left:48px;top:0px;width:12px;height:12px;background:#fafafa"></div><div class="a" style="left:60px;top:0px;width:12px;height:12px;background:#f6f6f8"></div><div class="a" style="left:72px;top:0px;width:12px;height:12px;background:#f6f6f8"></div><div class="a" style="left:84px;top:0px;width:12px;height:12px;background:#e6e6ea"></div><div class="a" style="left:96px;top:0px;width:12px;height:12px;background:#fafafa"></div><div class="a" style="left:108px;top:0px;width:12px;height:12px;background:#e6e6ea"></div><div class="a" style="left:120px;top:0px;width:12px;height:12px;background:#eeeef0"></div><div class="a" style="left:132px;top:0px;width:12px;height:12px;background:#eeeef0"></div><div class="a" style="left:144px;top:0px;width:12px;height:12px;background:#fafafa"></div><div class="a" style="left:156px;top:0px;width:12px;height:12px;background:#e6e6ea"></div><div class="a" style="left:168px;top:0px;width:12px;height:12px;background:#f6f6f8"></div><div class="a" style="left:180px;top:0px;width:12px;height:12px;background:#e2e2e6"></div><div class="a" style="left:192px;top:0px;width:12px;height:12px;background:#e6e6ea"></div><div class="a" style="left:204px;top:0px;width:12px;height:12px;background:#fafafa"></div><div class="a" style="left:216px;top:0px;width:12px;height:12px;background:#eeeef0"></div><div class="a" style="left:228px;top:0px;width:12px;height:12px;background:#f2f2f4"></div><div class="a" style="left:240px;top:0px;width:12px;height:12px;background:#f6f6f8"></div><div class="a" style="left:252px;top:0px;width:12px;height:12px;background:#eaeaec"></div><div class="a" style="left:264px;top:0px;width:12px;height:12px;background:#eeeef0"></div><div class="a" style="left:276px;top:0px;width:12px;height:12px;background:#f2f2f4"></div><div class="a" style="left:288px;top:0px;width:12px;height:12px;background:#e6e6ea"></div><div class="a" style="left:300px;top:0px;width:12px;height:12px;background:#fafafa"></div><div class="a" style="left:312px;top:0px;width:12px;height:12px;background:#e2e2e6"></div><div class="a" style="left:324px;top:0px;width:12px;height:12px;background:#e2e2e6"></div><div class="a" style="left:336px;top:0px;width:12px;height:12px;background:#f2f2f4"></div><div class="a" style="left:348px;top:0px;width:12px;height:12px;background:#e6e6ea"></div><div class="a" style="left:360px;top:0px;width:12px;height:12px;background:#f6f6f8"></div><div class="a" style="left:372px;top:0px;width:12px;height:12px;background:#f6f6f8"></div><div class="a" style="left:384px;top:0px;width:12px;height:12px;background:#e2e2e6"></div><div class="a" style="left:396px;top:0px;width:12px;height:12px;background:#e2e2e6"></div><div class="a" style="left:408px;top:0px;width:12px;height:12px;background:#e6e6ea"></div><div class="a" style="left:420px;top:0px;width:12px;height:12px;background:#e2e2e6"></div><div class="a" style="left:432px;top:0px;width:12px;height:12px;background:#eeeef0"></div><div class="a" style="left:444px;top:0px;width:12px;height:12px;background:#e6e6ea"></div><div class="a" style="left:456px;top:0px;width:12px;height:12px;background:#f2f2f4"></div><div class="a" style="left:468px;top:0px;width:12px;height:12px;background:#fafafa"></div><div class="a" style="left:480px;top:0px;width:12px;height:12px;background:#e6e6ea"></div><div class="a" style="left:492px;top:0px;width:12px;height:12px;background:#f2f2f4"></div><div class="a" style="left:504px;top:0px;width:12px;height:12px;background:#f2f2f4"></div><div class="a" style="left:516px;top:0px;width:12px;height:12px;background:#f2f2f4"></div><div class="a" style="left:528px;top:0px;width:12px;height:12px;background:#eeeef0"></div><div class="a" style="left:540px;top:0px;width:12px;height:12px;background:#eeeef0"></div><div class="a" style="left:552px;top:0px;width:12px;height:12px;background:#e6e6ea"></div><div class="a" style="left:564px;top:0px;width:12px;height:12px;background:#f2f2f4"></div><div class="a" style="left:576px;top:0px;width:12px;height:12px;background:#fafafa"></div><div class="a" style="left:0px;top:12px;width:12px;height:12px;background:#f6f6f8"></div><div class="a" style="left:12px;top:12px;width:12px;height:12px;background:#eaeaec"></div><div class="a" style="left:24px;top:12px;width:12px;height:12px;background:#f6f6f8"></div><div class="a" style="left:36px;top:12px;width:12px;height:12px;background:#e6e6ea"></div><div class="a" style="left:48px;top:12px;width:12px;height:12px;background:#fafafa"></div><div class="a" style="left:60px;top:12px;width:12px;height:12px;background:#eeeef0"></div><div class="a" style="left:72px;top:12px;width:12px;height:12px;background:#e6e6ea"></div><div class="a" style="left:84px;top:12px;width:12px;height:12px;background:#eeeef0"></div><div class="a" style="left:96px;top:12px;width:12px;height:12px;background:#e2e2e6"></div><div class="a" style="left:108px;top:12px;width:12px;height:12px;background:#eaeaec"></div><div class="a" style="left:120px;top:12px;width:12px;height:12px;background:#f6f6f8"></div><div class="a" style="left:132px;top:12px;width:12px;height:12px;background:#f2f2f4"></div><div class="a" style="left:144px;top:12px;width:12px;height:12px;background:#e2e2e6"></div><div class="a" style="left:156px;top:12px;width:12px;height:12px;background:#f2f2f4"></div><div class="a" style="left:168px;top:12px;width:12px;height:12px;background:#f6f6f8"></div><div class="a" style="left:180px;top:12px;width:12px;height:12px;background:#e2e2e6"></div><div class="a" style="left:192px;top:12px;width:12px;height:12px;background:#eaeaec"></div><div class="a" style="left:204px;top:12px;width:12px;height:12px;background:#f6f6f8"></div><div class="a" style="left:216px;top:12px;width:12px;height:12px;background:#e6e6ea"></div><div class="a" style="left:228px;top:12px;width:12px;height:12px;background:#fafafa"></div><div class="a" style="left:240px;top:12px;width:12px;height:12px;background:#f2f2f4"></div><div class="a" style="left:252px;top:12px;width:12px;height:12px;background:#e2e2e6"></div><div class="a" style="left:264px;top:12px;width:12px;height:12px;background:#eaeaec"></div><div class="a" style="left:276px;top:12px;width:12px;height:12px;background:#eaeaec"></div><div class="a" style="left:288px;top:12px;width:12px;height:12px;background:#fafafa"></div><div class="a" style="left:300px;top:12px;width:12px;height:12px;background:#eeeef0"></div><div class="a" style="left:312px;top:12px;width:12px;height:12px;background:#e6e6ea"></div><div class="a" style="left:324px;top:12px;width:12px;height:12px;background:#eaeaec"></div><div class="a" style="left:336px;top:12px;width:12px;height:12px;background:#f2f2f4"></div><div class="a" style="left:348px;top:12px;width:12px;height:12px;background:#f2f2f4"></div><div class="a" style="left:360px;top:12px;width:12px;height:12px;background:#e6e6ea"></div><div class="a" style="left:372px;top:12px;width:12px;height:12px;background:#fafafa"></div><div class="a" style="left:384px;top:12px;width:12px;height:12px;background:#f2f2f4"></div><div class="a" style="left:396px;top:12px;width:12px;height:12px;background:#f6f6f8"></div><div class="a" style="left:408px;top:12px;width:12px;height:12px;background:#f2f2f4"></div><div class="a" style="left:420px;top:12px;width:12px;height:12px;background:#fafafa"></div><div class="a" style="left:432px;top:12px;width:12px;height:12px;background:#eaeaec"></div><div class="a" style="left:444px;top:12px;width:12px;height:12px;background:#f6f6f8"></div><div class="a" style="left:456px;top:12px;width:12px;height:12px;background:#f2f2f4"></div><div class="a" style="left:468px;top:12px;width:12px;height:12px;background:#f2f2f4"></div><div class="a" style="left:480px;top:12px;width:12px;height:12px;background:#fafafa"></div><div class="a" style="left:492px;top:12px;width:12px;height:12px;background:#e2e2e6"></div><div class="a" style="left:504px;top:12px;width:12px;height:12px;background:#f2f2f4"></div><div class="a" style="left:516px;top:12px;width:12px;height:12px;background:#eeeef0"></div><div class="a" style="left:528px;top:12px;width:12px;height:12px;background:#eeeef0"></div><div class="a" style="left:540px;top:12px;width:12px;height:12px;background:#f2f2f4"></div><div class="a" style="left:552px;top:12px;width:12px;height:12px;background:#f6f6f8"></div><div class="a" style="left:564px;top:12px;width:12px;height:12px;background:#f6f6f8"></div><div class="a" style="left:576px;top:12px;width:12px;height:12px;background:#e2e2e6"></div><div class="a" style="left:0px;top:24px;width:12px;height:12px;background:#cfcfd3"></div><div class="a" style="left:12px;top:24px;width:12px;height:12px;background:#cfcfd3"></div><div class="a" style="left:24px;top:24px;width:12px;height:12px;background:#cacace"></div><div class="a" style="left:36px;top:24px;width:12px;height:12px;background:#d4d4d8"></div><div class="a" style="left:48px;top:24px;width:12px;height:12px;background:#c6c6ca"></div><div class="a" style="left:60px;top:24px;width:12px;height:12px;background:#e2e2e4"></div><div class="a" style="left:72px;top:24px;width:12px;height:12px;background:#cacace"></div><div class="a" style="left:84px;top:24px;width:12px;height:12px;background:#c6c6ca"></div><div class="a" style="left:96px;top:24px;width:12px;height:12px;background:#e2e2e4"></div><div class="a" style="left:108px;top:24px;width:12px;height:12px;background:#c2c2c6"></div><div class="a" style="left:120px;top:24px;width:12px;height:12px;background:#cfcfd3"></div><div class="a" style="left:132px;top:24px;width:12px;height:12px;background:#cacace"></div><div class="a" style="left:144px;top:24px;width:12px;height:12px;background:#b6b6ba"></div><div class="a" style="left:156px;top:24px;width:12px;height:12px;background:#d4d4d8"></div><div class="a" style="left:168px;top:24px;width:12px;height:12px;background:#cacace"></div><div class="a" style="left:180px;top:24px;width:12px;height:12px;background:#c2c2c6"></div><div class="a" style="left:192px;top:24px;width:12px;height:12px;background:#c2c2c6"></div><div class="a" style="left:204px;top:24px;width:12px;height:12px;background:#dadade"></div><div class="a" style="left:216px;top:24px;width:12px;height:12px;background:#dadade"></div><div class="a" style="left:228px;top:24px;width:12px;height:12px;background:#b6b6ba"></div><div class="a" style="left:240px;top:24px;width:12px;height:12px;background:#d4d4d8"></div><div class="a" style="left:252px;top:24px;width:12px;height:12px;background:#dadade"></div><div class="a" style="left:264px;top:24px;width:12px;height:12px;background:#d4d4d8"></div><div class="a" style="left:276px;top:24px;width:12px;height:12px;background:#b6b6ba"></div><div class="a" style="left:288px;top:24px;width:12px;height:12px;background:#cfcfd3"></div><div class="a" style="left:300px;top:24px;width:12px;height:12px;background:#cfcfd3"></div><div class="a" style="left:312px;top:24px;width:12px;height:12px;background:#cacace"></div><div class="a" style="left:324px;top:24px;width:12px;height:12px;background:#cfcfd3"></div><div class="a" style="left:336px;top:24px;width:12px;height:12px;background:#cfcfd3"></div><div class="a" style="left:348px;top:24px;width:12px;height:12px;background:#d4d4d8"></div><div class="a" style="left:360px;top:24px;width:12px;height:12px;background:#c2c2c6"></div><div class="a" style="left:372px;top:24px;width:12px;height:12px;background:#c6c6ca"></div><div class="a" style="left:384px;top:24px;width:12px;height:12px;background:#c6c6ca"></div><div class="a" style="left:396px;top:24px;width:12px;height:12px;background:#c2c2c6"></div><div class="a" style="left:408px;top:24px;width:12px;height:12px;background:#d4d4d8"></div><div class="a" style="left:420px;top:24px;width:12px;height:12px;background:#b6b6ba"></div><div class="a" style="left:432px;top:24px;width:12px;height:12px;background:#cfcfd3"></div><div class="a" style="left:444px;top:24px;width:12px;height:12px;background:#cacace"></div><div class="a" style="left:456px;top:24px;width:12px;height:12px;background:#c2c2c6"></div><div class="a" style="left:468px;top:24px;width:12px;height:12px;background:#b6b6ba"></div><div class="a" style="left:480px;top:24px;width:12px;height:12px;background:#d4d4d8"></div><div class="a" style="left:492px;top:24px;width:12px;height:12px;background:#dadade"></div><div class="a" style="left:504px;top:24px;width:12px;height:12px;background:#c6c6ca"></div><div class="a" style="left:516px;top:24px;width:12px;height:12px;background:#c2c2c6"></div><div class="a" style="left:528px;top:24px;width:12px;height:12px;background:#e2e2e4"></div><div class="a" style="left:540px;top:24px;width:12px;height:12px;background:#c6c6ca"></div><div class="a" style="left:552px;top:24px;width:12px;height:12px;background:#cfcfd3"></div><div class="a" style="left:564px;top:24px;width:12px;height:12px;background:#cacace"></div><div class="a" style="left:576px;top:24px;width:12px;height:12px;background:#cacace"></div><div class="a" style="left:0px;top:36px;width:12px;height:12px;background:#e0e1e4"></div><div class="a" style="left:12px;top:36px;width:12px;height:12px;background:#e8e8ea"></div><div class="a" style="left:24px;top:36px;width:12px;height:12px;background:#e8e8ea"></div><div class="a" style="left:36px;top:36px;width:12px;height:12px;background:#dcdce0"></div><div class="a" style="left:48px;top:36px;width:12px;height:12px;background:#e4e4e6"></div><div class="a" style="left:60px;top:36px;width:12px;height:12px;background:#e4e4e6"></div><div class="a" style="left:72px;top:36px;width:12px;height:12px;background:#ececee"></div><div class="a" style="left:84px;top:36px;width:12px;height:12px;background:#d6d6da"></div><div class="a" style="left:96px;top:36px;width:12px;height:12px;background:#ececee"></div><div class="a" style="left:108px;top:36px;width:12px;height:12px;background:#d6d6da"></div><div class="a" style="left:120px;top:36px;width:12px;height:12px;background:#f0f0f2"></div><div class="a" style="left:132px;top:36px;width:12px;height:12px;background:#d6d6da"></div><div class="a" style="left:144px;top:36px;width:12px;height:12px;background:#d6d6da"></div><div class="a" style="left:156px;top:36px;width:12px;height:12px;background:#d4d5d9"></div><div class="a" style="left:168px;top:36px;width:12px;height:12px;background:#e8e8ea"></div><div class="a" style="left:180px;top:36px;width:12px;height:12px;background:#e8e8ea"></div><div class="a" style="left:192px;top:36px;width:12px;height:12px;background:#e8e8ea"></div><div class="a" style="left:204px;top:36px;width:12px;height:12px;background:#d6d6da"></div><div class="a" style="left:216px;top:36px;width:12px;height:12px;background:#e8e8ea"></div><div class="a" style="left:228px;top:36px;width:12px;height:12px;background:#f0f0f2"></div><div class="a" style="left:240px;top:36px;width:12px;height:12px;background:#ececee"></div><div class="a" style="left:252px;top:36px;width:12px;height:12px;background:#e0e1e4"></div><div class="a" style="left:264px;top:36px;width:12px;height:12px;background:#f0f0f2"></div><div class="a" style="left:276px;top:36px;width:12px;height:12px;background:#dcdce0"></div><div class="a" style="left:288px;top:36px;width:12px;height:12px;background:#e0e1e4"></div><div class="a" style="left:300px;top:36px;width:12px;height:12px;background:#e0e1e4"></div><div class="a" style="left:312px;top:36px;width:12px;height:12px;background:#dcdce0"></div><div class="a" style="left:324px;top:36px;width:12px;height:12px;background:#d4d5d9"></div><div class="a" style="left:336px;top:36px;width:12px;height:12px;background:#e8e8ea"></div><div class="a" style="left:348px;top:36px;width:12px;height:12px;background:#f0f0f2"></div><div class="a" style="left:360px;top:36px;width:12px;height:12px;background:#d4d5d9"></div><div class="a" style="left:372px;top:36px;width:12px;height:12px;background:#f0f0f2"></div><div class="a" style="left:384px;top:36px;width:12px;height:12px;background:#ececee"></div><div class="a" style="left:396px;top:36px;width:12px;height:12px;background:#d4d5d9"></div><div class="a" style="left:408px;top:36px;width:12px;height:12px;background:#d6d6da"></div><div class="a" style="left:420px;top:36px;width:12px;height:12px;background:#e0e1e4"></div><div class="a" style="left:432px;top:36px;width:12px;height:12px;background:#d6d6da"></div><div class="a" style="left:444px;top:36px;width:12px;height:12px;background:#e8e8ea"></div><div class="a" style="left:456px;top:36px;width:12px;height:12px;background:#ececee"></div><div class="a" style="left:468px;top:36px;width:12px;height:12px;background:#e0e1e4"></div><div class="a" style="left:480px;top:36px;width:12px;height:12px;background:#d4d5d9"></div><div class="a" style="left:492px;top:36px;width:12px;height:12px;background:#e8e8ea"></div><div class="a" style="left:504px;top:36px;width:12px;height:12px;background:#e8e8ea"></div><div class="a" style="left:516px;top:36px;width:12px;height:12px;background:#dcdce0"></div><div class="a" style="left:528px;top:36px;width:12px;height:12px;background:#e0e1e4"></div><div class="a" style="left:540px;top:36px;width:12px;height:12px;background:#d4d5d9"></div><div class="a" style="left:552px;top:36px;width:12px;height:12px;background:#f0f0f2"></div><div class="a" style="left:564px;top:36px;width:12px;height:12px;background:#ececee"></div><div class="a" style="left:576px;top:36px;width:12px;height:12px;background:#e8e8ea"></div><div class="a" style="left:0px;top:48px;width:12px;height:12px;background:#f2f2f4"></div><div class="a" style="left:12px;top:48px;width:12px;height:12px;background:#f2f2f4"></div><div class="a" style="left:24px;top:48px;width:12px;height:12px;background:#eeeef0"></div><div class="a" style="left:36px;top:48px;width:12px;height:12px;background:#eaeaec"></div><div class="a" style="left:48px;top:48px;width:12px;height:12px;background:#eaeaec"></div><div class="a" style="left:60px;top:48px;width:12px;height:12px;background:#e6e6ea"></div><div class="a" style="left:72px;top:48px;width:12px;height:12px;background:#e6e6ea"></div><div class="a" style="left:84px;top:48px;width:12px;height:12px;background:#eeeef0"></div><div class="a" style="left:96px;top:48px;width:12px;height:12px;background:#f2f2f4"></div><div class="a" style="left:108px;top:48px;width:12px;height:12px;background:#eaeaec"></div><div class="a" style="left:120px;top:48px;width:12px;height:12px;background:#eeeef0"></div><div class="a" style="left:132px;top:48px;width:12px;height:12px;background:#f6f6f8"></div><div class="a" style="left:144px;top:48px;width:12px;height:12px;background:#eaeaec"></div><div class="a" style="left:156px;top:48px;width:12px;height:12px;background:#e2e2e6"></div><div class="a" style="left:168px;top:48px;width:12px;height:12px;background:#e2e2e6"></div><div class="a" style="left:180px;top:48px;width:12px;height:12px;background:#e2e2e6"></div><div class="a" style="left:192px;top:48px;width:12px;height:12px;background:#e6e6ea"></div><div class="a" style="left:204px;top:48px;width:12px;height:12px;background:#e6e6ea"></div><div class="a" style="left:216px;top:48px;width:12px;height:12px;background:#eeeef0"></div><div class="a" style="left:228px;top:48px;width:12px;height:12px;background:#e6e6ea"></div><div class="a" style="left:240px;top:48px;width:12px;height:12px;background:#f2f2f4"></div><div class="a" style="left:252px;top:48px;width:12px;height:12px;background:#f2f2f4"></div><div class="a" style="left:264px;top:48px;width:12px;height:12px;background:#f6f6f8"></div><div class="a" style="left:276px;top:48px;width:12px;height:12px;background:#eaeaec"></div><div class="a" style="left:288px;top:48px;width:12px;height:12px;background:#e2e2e6"></div><div class="a" style="left:300px;top:48px;width:12px;height:12px;background:#eaeaec"></div><div class="a" style="left:312px;top:48px;width:12px;height:12px;background:#f2f2f4"></div><div class="a" style="left:324px;top:48px;width:12px;height:12px;background:#f2f2f4"></div><div class="a" style="left:336px;top:48px;width:12px;height:12px;background:#e6e6ea"></div><div class="a" style="left:348px;top:48px;width:12px;height:12px;background:#e2e2e6"></div><div class="a" style="left:360px;top:48px;width:12px;height:12px;background:#f2f2f4"></div><div class="a" style="left:372px;top:48px;width:12px;height:12px;background:#f6f6f8"></div><div class="a" style="left:384px;top:48px;width:12px;height:12px;background:#f2f2f4"></div><div class="a" style="left:396px;top:48px;width:12px;height:12px;background:#e2e2e6"></div><div class="a" style="left:408px;top:48px;width:12px;height:12px;background:#eaeaec"></div><div class="a" style="left:420px;top:48px;width:12px;height:12px;background:#eaeaec"></div><div class="a" style="left:432px;top:48px;width:12px;height:12px;background:#eeeef0"></div><div class="a" style="left:444px;top:48px;width:12px;height:12px;background:#f2f2f4"></div><div class="a" style="left:456px;top:48px;width:12px;height:12px;background:#f2f2f4"></div><div class="a" style="left:468px;top:48px;width:12px;height:12px;background:#f6f6f8"></div><div class="a" style="left:480px;top:48px;width:12px;height:12px;background:#e6e6ea"></div><div class="a" style="left:492px;top:48px;width:12px;height:12px;background:#eaeaec"></div><div class="a" style="left:504px;top:48px;width:12px;height:12px;background:#e2e2e6"></div><div class="a" style="left:516px;top:48px;width:12px;height:12px;background:#f2f2f4"></div><div class="a" style="left:528px;top:48px;width:12px;height:12px;background:#e2e2e6"></div><div class="a" style="left:540px;top:48px;width:12px;height:12px;background:#e2e2e6"></div><div class="a" style="left:552px;top:48px;width:12px;height:12px;background:#e2e2e6"></div><div class="a" style="left:564px;top:48px;width:12px;height:12px;background:#eeeef0"></div><div class="a" style="left:576px;top:48px;width:12px;height:12px;background:#fafafa"></div><div class="a" style="left:0px;top:60px;width:12px;height:12px;background:#e4e4e6"></div><div class="a" style="left:12px;top:60px;width:12px;height:12px;background:#e4e4e6"></div><div class="a" style="left:24px;top:60px;width:12px;height:12px;background:#e0e1e4"></div><div class="a" style="left:36px;top:60px;width:12px;height:12px;background:#ececee"></div><div class="a" style="left:48px;top:60px;width:12px;height:12px;background:#e0e1e4"></div><div class="a" style="left:60px;top:60px;width:12px;height:12px;background:#f0f0f2"></div><div class="a" style="left:72px;top:60px;width:12px;height:12px;background:#dcdce0"></div><div class="a" style="left:84px;top:60px;width:12px;height:12px;background:#ececee"></div><div class="a" style="left:96px;top:60px;width:12px;height:12px;background:#dcdce0"></div><div class="a" style="left:108px;top:60px;width:12px;height:12px;background:#f0f0f2"></div><div class="a" style="left:120px;top:60px;width:12px;height:12px;background:#f0f0f2"></div><div class="a" style="left:132px;top:60px;width:12px;height:12px;background:#dcdce0"></div><div class="a" style="left:144px;top:60px;width:12px;height:12px;background:#e0e1e4"></div><div class="a" style="left:156px;top:60px;width:12px;height:12px;background:#e0e1e4"></div><div class="a" style="left:168px;top:60px;width:12px;height:12px;background:#e0e1e4"></div><div class="a" style="left:180px;top:60px;width:12px;height:12px;background:#e0e1e4"></div><div class="a" style="left:192px;top:60px;width:12px;height:12px;background:#d4d5d9"></div><div class="a" style="left:204px;top:60px;width:12px;height:12px;background:#f0f0f2"></div><div class="a" style="left:216px;top:60px;width:12px;height:12px;background:#e4e4e6"></div><div class="a" style="left:228px;top:60px;width:12px;height:12px;background:#f0f0f2"></div><div class="a" style="left:240px;top:60px;width:12px;height:12px;background:#ececee"></div><div class="a" style="left:252px;top:60px;width:12px;height:12px;background:#ececee"></div><div class="a" style="left:264px;top:60px;width:12px;height:12px;background:#ececee"></div><div class="a" style="left:276px;top:60px;width:12px;height:12px;background:#e0e1e4"></div><div class="a" style="left:288px;top:60px;width:12px;height:12px;background:#dcdce0"></div><div class="a" style="left:300px;top:60px;width:12px;height:12px;background:#d4d5d9"></div><div class="a" style="left:312px;top:60px;width:12px;height:12px;background:#e0e1e4"></div><div class="a" style="left:324px;top:60px;width:12px;height:12px;background:#ececee"></div><div class="a" style="left:336px;top:60px;width:12px;height:12px;background:#dcdce0"></div><div class="a" style="left:348px;top:60px;width:12px;height:12px;background:#e8e8ea"></div><div class="a" style="left:360px;top:60px;width:12px;height:12px;background:#e0e1e4"></div><div class="a" style="left:372px;top:60px;width:12px;height:12px;background:#ececee"></div><div class="a" style="left:384px;top:60px;width:12px;height:12px;background:#ececee"></div><div class="a" style="left:396px;top:60px;width:12px;height:12px;background:#d4d5d9"></div><div class="a" style="left:408px;top:60px;width:12px;height:12px;background:#dcdce0"></div><div class="a" style="left:420px;top:60px;width:12px;height:12px;background:#e4e4e6"></div><div class="a" style="left:432px;top:60px;width:12px;height:12px;background:#d4d5d9"></div><div class="a" style="left:444px;top:60px;width:12px;height:12px;background:#d6d6da"></div><div class="a" style="left:456px;top:60px;width:12px;height:12px;background:#e8e8ea"></div><div class="a" style="left:468px;top:60px;width:12px;height:12px;background:#d6d6da"></div><div class="a" style="left:480px;top:60px;width:12px;height:12px;background:#e4e4e6"></div><div class="a" style="left:492px;top:60px;width:12px;height:12px;background:#ececee"></div><div class="a" style="left:504px;top:60px;width:12px;height:12px;background:#ececee"></div><div class="a" style="left:516px;top:60px;width:12px;height:12px;background:#e8e8ea"></div><div class="a" style="left:528px;top:60px;width:12px;height:12px;background:#e4e4e6"></div><div class="a" style="left:540px;top:60px;width:12px;height:12px;background:#f0f0f2"></div><div class="a" style="left:552px;top:60px;width:12px;height:12px;background:#d4d5d9"></div><div class="a" style="left:564px;top:60px;width:12px;height:12px;background:#e8e8ea"></div><div class="a" style="left:576px;top:60px;width:12px;height:12px;background:#f0f0f2"></div></div>
<div class="a" style="left:696px;top:710px;width:564px;height:72px;overflow:hidden;clip-path:polygon(0 19px,413px 19px,418px 2px,440px 0,540px 0,556px 10px,560px 25px,560px 52px,550px 61px,276px 61px,276px 73px,0 73px);"><div class="a" style="left:0px;top:0px;width:12px;height:12px;background:#fafafa"></div><div class="a" style="left:12px;top:0px;width:12px;height:12px;background:#fafafa"></div><div class="a" style="left:24px;top:0px;width:12px;height:12px;background:#fafafa"></div><div class="a" style="left:36px;top:0px;width:12px;height:12px;background:#eeeef0"></div><div class="a" style="left:48px;top:0px;width:12px;height:12px;background:#eeeef0"></div><div class="a" style="left:60px;top:0px;width:12px;height:12px;background:#f6f6f8"></div><div class="a" style="left:72px;top:0px;width:12px;height:12px;background:#eeeef0"></div><div class="a" style="left:84px;top:0px;width:12px;height:12px;background:#e6e6ea"></div><div class="a" style="left:96px;top:0px;width:12px;height:12px;background:#eaeaec"></div><div class="a" style="left:108px;top:0px;width:12px;height:12px;background:#eeeef0"></div><div class="a" style="left:120px;top:0px;width:12px;height:12px;background:#eeeef0"></div><div class="a" style="left:132px;top:0px;width:12px;height:12px;background:#eeeef0"></div><div class="a" style="left:144px;top:0px;width:12px;height:12px;background:#f6f6f8"></div><div class="a" style="left:156px;top:0px;width:12px;height:12px;background:#eaeaec"></div><div class="a" style="left:168px;top:0px;width:12px;height:12px;background:#fafafa"></div><div class="a" style="left:180px;top:0px;width:12px;height:12px;background:#fafafa"></div><div class="a" style="left:192px;top:0px;width:12px;height:12px;background:#f2f2f4"></div><div class="a" style="left:204px;top:0px;width:12px;height:12px;background:#e2e2e6"></div><div class="a" style="left:216px;top:0px;width:12px;height:12px;background:#f2f2f4"></div><div class="a" style="left:228px;top:0px;width:12px;height:12px;background:#eaeaec"></div><div class="a" style="left:240px;top:0px;width:12px;height:12px;background:#fafafa"></div><div class="a" style="left:252px;top:0px;width:12px;height:12px;background:#eeeef0"></div><div class="a" style="left:264px;top:0px;width:12px;height:12px;background:#f2f2f4"></div><div class="a" style="left:276px;top:0px;width:12px;height:12px;background:#f6f6f8"></div><div class="a" style="left:288px;top:0px;width:12px;height:12px;background:#f6f6f8"></div><div class="a" style="left:300px;top:0px;width:12px;height:12px;background:#eaeaec"></div><div class="a" style="left:312px;top:0px;width:12px;height:12px;background:#eeeef0"></div><div class="a" style="left:324px;top:0px;width:12px;height:12px;background:#fafafa"></div><div class="a" style="left:336px;top:0px;width:12px;height:12px;background:#f6f6f8"></div><div class="a" style="left:348px;top:0px;width:12px;height:12px;background:#f6f6f8"></div><div class="a" style="left:360px;top:0px;width:12px;height:12px;background:#e2e2e6"></div><div class="a" style="left:372px;top:0px;width:12px;height:12px;background:#e6e6ea"></div><div class="a" style="left:384px;top:0px;width:12px;height:12px;background:#f6f6f8"></div><div class="a" style="left:396px;top:0px;width:12px;height:12px;background:#e2e2e6"></div><div class="a" style="left:408px;top:0px;width:12px;height:12px;background:#eaeaec"></div><div class="a" style="left:420px;top:0px;width:12px;height:12px;background:#e2e2e6"></div><div class="a" style="left:432px;top:0px;width:12px;height:12px;background:#fafafa"></div><div class="a" style="left:444px;top:0px;width:12px;height:12px;background:#fafafa"></div><div class="a" style="left:456px;top:0px;width:12px;height:12px;background:#e6e6ea"></div><div class="a" style="left:468px;top:0px;width:12px;height:12px;background:#f6f6f8"></div><div class="a" style="left:480px;top:0px;width:12px;height:12px;background:#eaeaec"></div><div class="a" style="left:492px;top:0px;width:12px;height:12px;background:#f2f2f4"></div><div class="a" style="left:504px;top:0px;width:12px;height:12px;background:#fafafa"></div><div class="a" style="left:516px;top:0px;width:12px;height:12px;background:#f2f2f4"></div><div class="a" style="left:528px;top:0px;width:12px;height:12px;background:#eaeaec"></div><div class="a" style="left:540px;top:0px;width:12px;height:12px;background:#fafafa"></div><div class="a" style="left:552px;top:0px;width:12px;height:12px;background:#e6e6ea"></div><div class="a" style="left:0px;top:12px;width:12px;height:12px;background:#f2f2f4"></div><div class="a" style="left:12px;top:12px;width:12px;height:12px;background:#e2e2e6"></div><div class="a" style="left:24px;top:12px;width:12px;height:12px;background:#e2e2e6"></div><div class="a" style="left:36px;top:12px;width:12px;height:12px;background:#eaeaec"></div><div class="a" style="left:48px;top:12px;width:12px;height:12px;background:#e6e6ea"></div><div class="a" style="left:60px;top:12px;width:12px;height:12px;background:#eaeaec"></div><div class="a" style="left:72px;top:12px;width:12px;height:12px;background:#eaeaec"></div><div class="a" style="left:84px;top:12px;width:12px;height:12px;background:#e2e2e6"></div><div class="a" style="left:96px;top:12px;width:12px;height:12px;background:#fafafa"></div><div class="a" style="left:108px;top:12px;width:12px;height:12px;background:#e6e6ea"></div><div class="a" style="left:120px;top:12px;width:12px;height:12px;background:#f2f2f4"></div><div class="a" style="left:132px;top:12px;width:12px;height:12px;background:#e2e2e6"></div><div class="a" style="left:144px;top:12px;width:12px;height:12px;background:#eeeef0"></div><div class="a" style="left:156px;top:12px;width:12px;height:12px;background:#f6f6f8"></div><div class="a" style="left:168px;top:12px;width:12px;height:12px;background:#f6f6f8"></div><div class="a" style="left:180px;top:12px;width:12px;height:12px;background:#eeeef0"></div><div class="a" style="left:192px;top:12px;width:12px;height:12px;background:#f2f2f4"></div><div class="a" style="left:204px;top:12px;width:12px;height:12px;background:#fafafa"></div><div class="a" style="left:216px;top:12px;width:12px;height:12px;background:#fafafa"></div><div class="a" style="left:228px;top:12px;width:12px;height:12px;background:#eaeaec"></div><div class="a" style="left:240px;top:12px;width:12px;height:12px;background:#eeeef0"></div><div class="a" style="left:252px;top:12px;width:12px;height:12px;background:#fafafa"></div><div class="a" style="left:264px;top:12px;width:12px;height:12px;background:#eeeef0"></div><div class="a" style="left:276px;top:12px;width:12px;height:12px;background:#fafafa"></div><div class="a" style="left:288px;top:12px;width:12px;height:12px;background:#f2f2f4"></div><div class="a" style="left:300px;top:12px;width:12px;height:12px;background:#e2e2e6"></div><div class="a" style="left:312px;top:12px;width:12px;height:12px;background:#f2f2f4"></div><div class="a" style="left:324px;top:12px;width:12px;height:12px;background:#f6f6f8"></div><div class="a" style="left:336px;top:12px;width:12px;height:12px;background:#f2f2f4"></div><div class="a" style="left:348px;top:12px;width:12px;height:12px;background:#e2e2e6"></div><div class="a" style="left:360px;top:12px;width:12px;height:12px;background:#e6e6ea"></div><div class="a" style="left:372px;top:12px;width:12px;height:12px;background:#e2e2e6"></div><div class="a" style="left:384px;top:12px;width:12px;height:12px;background:#e2e2e6"></div><div class="a" style="left:396px;top:12px;width:12px;height:12px;background:#fafafa"></div><div class="a" style="left:408px;top:12px;width:12px;height:12px;background:#eaeaec"></div><div class="a" style="left:420px;top:12px;width:12px;height:12px;background:#f2f2f4"></div><div class="a" style="left:432px;top:12px;width:12px;height:12px;background:#e2e2e6"></div><div class="a" style="left:444px;top:12px;width:12px;height:12px;background:#eeeef0"></div><div class="a" style="left:456px;top:12px;width:12px;height:12px;background:#eeeef0"></div><div class="a" style="left:468px;top:12px;width:12px;height:12px;background:#fafafa"></div><div class="a" style="left:480px;top:12px;width:12px;height:12px;background:#f6f6f8"></div><div class="a" style="left:492px;top:12px;width:12px;height:12px;background:#eaeaec"></div><div class="a" style="left:504px;top:12px;width:12px;height:12px;background:#eeeef0"></div><div class="a" style="left:516px;top:12px;width:12px;height:12px;background:#e2e2e6"></div><div class="a" style="left:528px;top:12px;width:12px;height:12px;background:#f2f2f4"></div><div class="a" style="left:540px;top:12px;width:12px;height:12px;background:#fafafa"></div><div class="a" style="left:552px;top:12px;width:12px;height:12px;background:#f6f6f8"></div><div class="a" style="left:0px;top:24px;width:12px;height:12px;background:#c2c2c6"></div><div class="a" style="left:12px;top:24px;width:12px;height:12px;background:#b6b6ba"></div><div class="a" style="left:24px;top:24px;width:12px;height:12px;background:#d4d4d8"></div><div class="a" style="left:36px;top:24px;width:12px;height:12px;background:#c6c6ca"></div><div class="a" style="left:48px;top:24px;width:12px;height:12px;background:#e2e2e4"></div><div class="a" style="left:60px;top:24px;width:12px;height:12px;background:#b6b6ba"></div><div class="a" style="left:72px;top:24px;width:12px;height:12px;background:#cfcfd3"></div><div class="a" style="left:84px;top:24px;width:12px;height:12px;background:#d4d4d8"></div><div class="a" style="left:96px;top:24px;width:12px;height:12px;background:#cacace"></div><div class="a" style="left:108px;top:24px;width:12px;height:12px;background:#cfcfd3"></div><div class="a" style="left:120px;top:24px;width:12px;height:12px;background:#cfcfd3"></div><div class="a" style="left:132px;top:24px;width:12px;height:12px;background:#b6b6ba"></div><div class="a" style="left:144px;top:24px;width:12px;height:12px;background:#dadade"></div><div class="a" style="left:156px;top:24px;width:12px;height:12px;background:#dadade"></div><div class="a" style="left:168px;top:24px;width:12px;height:12px;background:#d4d4d8"></div><div class="a" style="left:180px;top:24px;width:12px;height:12px;background:#c2c2c6"></div><div class="a" style="left:192px;top:24px;width:12px;height:12px;background:#cfcfd3"></div><div class="a" style="left:204px;top:24px;width:12px;height:12px;background:#e2e2e4"></div><div class="a" style="left:216px;top:24px;width:12px;height:12px;background:#dadade"></div><div class="a" style="left:228px;top:24px;width:12px;height:12px;background:#e2e2e4"></div><div class="a" style="left:240px;top:24px;width:12px;height:12px;background:#d4d4d8"></div><div class="a" style="left:252px;top:24px;width:12px;height:12px;background:#cacace"></div><div class="a" style="left:264px;top:24px;width:12px;height:12px;background:#cacace"></div><div class="a" style="left:276px;top:24px;width:12px;height:12px;background:#d4d4d8"></div><div class="a" style="left:288px;top:24px;width:12px;height:12px;background:#d4d4d8"></div><div class="a" style="left:300px;top:24px;width:12px;height:12px;background:#cfcfd3"></div><div class="a" style="left:312px;top:24px;width:12px;height:12px;background:#cacace"></div><div class="a" style="left:324px;top:24px;width:12px;height:12px;background:#c6c6ca"></div><div class="a" style="left:336px;top:24px;width:12px;height:12px;background:#e2e2e4"></div><div class="a" style="left:348px;top:24px;width:12px;height:12px;background:#c6c6ca"></div><div class="a" style="left:360px;top:24px;width:12px;height:12px;background:#c2c2c6"></div><div class="a" style="left:372px;top:24px;width:12px;height:12px;background:#e2e2e4"></div><div class="a" style="left:384px;top:24px;width:12px;height:12px;background:#cacace"></div><div class="a" style="left:396px;top:24px;width:12px;height:12px;background:#c2c2c6"></div><div class="a" style="left:408px;top:24px;width:12px;height:12px;background:#dadade"></div><div class="a" style="left:420px;top:24px;width:12px;height:12px;background:#e2e2e4"></div><div class="a" style="left:432px;top:24px;width:12px;height:12px;background:#cfcfd3"></div><div class="a" style="left:444px;top:24px;width:12px;height:12px;background:#c6c6ca"></div><div class="a" style="left:456px;top:24px;width:12px;height:12px;background:#dadade"></div><div class="a" style="left:468px;top:24px;width:12px;height:12px;background:#c2c2c6"></div><div class="a" style="left:480px;top:24px;width:12px;height:12px;background:#d4d4d8"></div><div class="a" style="left:492px;top:24px;width:12px;height:12px;background:#cacace"></div><div class="a" style="left:504px;top:24px;width:12px;height:12px;background:#cfcfd3"></div><div class="a" style="left:516px;top:24px;width:12px;height:12px;background:#c2c2c6"></div><div class="a" style="left:528px;top:24px;width:12px;height:12px;background:#b6b6ba"></div><div class="a" style="left:540px;top:24px;width:12px;height:12px;background:#e2e2e4"></div><div class="a" style="left:552px;top:24px;width:12px;height:12px;background:#b6b6ba"></div><div class="a" style="left:0px;top:36px;width:12px;height:12px;background:#ececee"></div><div class="a" style="left:12px;top:36px;width:12px;height:12px;background:#d6d6da"></div><div class="a" style="left:24px;top:36px;width:12px;height:12px;background:#ececee"></div><div class="a" style="left:36px;top:36px;width:12px;height:12px;background:#ececee"></div><div class="a" style="left:48px;top:36px;width:12px;height:12px;background:#e0e1e4"></div><div class="a" style="left:60px;top:36px;width:12px;height:12px;background:#e8e8ea"></div><div class="a" style="left:72px;top:36px;width:12px;height:12px;background:#ececee"></div><div class="a" style="left:84px;top:36px;width:12px;height:12px;background:#d4d5d9"></div><div class="a" style="left:96px;top:36px;width:12px;height:12px;background:#d6d6da"></div><div class="a" style="left:108px;top:36px;width:12px;height:12px;background:#d4d5d9"></div><div class="a" style="left:120px;top:36px;width:12px;height:12px;background:#d4d5d9"></div><div class="a" style="left:132px;top:36px;width:12px;height:12px;background:#f0f0f2"></div><div class="a" style="left:144px;top:36px;width:12px;height:12px;background:#e8e8ea"></div><div class="a" style="left:156px;top:36px;width:12px;height:12px;background:#d4d5d9"></div><div class="a" style="left:168px;top:36px;width:12px;height:12px;background:#d6d6da"></div><div class="a" style="left:180px;top:36px;width:12px;height:12px;background:#d4d5d9"></div><div class="a" style="left:192px;top:36px;width:12px;height:12px;background:#ececee"></div><div class="a" style="left:204px;top:36px;width:12px;height:12px;background:#e8e8ea"></div><div class="a" style="left:216px;top:36px;width:12px;height:12px;background:#f0f0f2"></div><div class="a" style="left:228px;top:36px;width:12px;height:12px;background:#e0e1e4"></div><div class="a" style="left:240px;top:36px;width:12px;height:12px;background:#dcdce0"></div><div class="a" style="left:252px;top:36px;width:12px;height:12px;background:#f0f0f2"></div><div class="a" style="left:264px;top:36px;width:12px;height:12px;background:#dcdce0"></div><div class="a" style="left:276px;top:36px;width:12px;height:12px;background:#dcdce0"></div><div class="a" style="left:288px;top:36px;width:12px;height:12px;background:#f0f0f2"></div><div class="a" style="left:300px;top:36px;width:12px;height:12px;background:#e0e1e4"></div><div class="a" style="left:312px;top:36px;width:12px;height:12px;background:#ececee"></div><div class="a" style="left:324px;top:36px;width:12px;height:12px;background:#e0e1e4"></div><div class="a" style="left:336px;top:36px;width:12px;height:12px;background:#d6d6da"></div><div class="a" style="left:348px;top:36px;width:12px;height:12px;background:#e0e1e4"></div><div class="a" style="left:360px;top:36px;width:12px;height:12px;background:#ececee"></div><div class="a" style="left:372px;top:36px;width:12px;height:12px;background:#f0f0f2"></div><div class="a" style="left:384px;top:36px;width:12px;height:12px;background:#f0f0f2"></div><div class="a" style="left:396px;top:36px;width:12px;height:12px;background:#d4d5d9"></div><div class="a" style="left:408px;top:36px;width:12px;height:12px;background:#e8e8ea"></div><div class="a" style="left:420px;top:36px;width:12px;height:12px;background:#ececee"></div><div class="a" style="left:432px;top:36px;width:12px;height:12px;background:#ececee"></div><div class="a" style="left:444px;top:36px;width:12px;height:12px;background:#d6d6da"></div><div class="a" style="left:456px;top:36px;width:12px;height:12px;background:#e4e4e6"></div><div class="a" style="left:468px;top:36px;width:12px;height:12px;background:#f0f0f2"></div><div class="a" style="left:480px;top:36px;width:12px;height:12px;background:#ececee"></div><div class="a" style="left:492px;top:36px;width:12px;height:12px;background:#e4e4e6"></div><div class="a" style="left:504px;top:36px;width:12px;height:12px;background:#e0e1e4"></div><div class="a" style="left:516px;top:36px;width:12px;height:12px;background:#e8e8ea"></div><div class="a" style="left:528px;top:36px;width:12px;height:12px;background:#f0f0f2"></div><div class="a" style="left:540px;top:36px;width:12px;height:12px;background:#dcdce0"></div><div class="a" style="left:552px;top:36px;width:12px;height:12px;background:#d4d5d9"></div><div class="a" style="left:0px;top:48px;width:12px;height:12px;background:#eeeef0"></div><div class="a" style="left:12px;top:48px;width:12px;height:12px;background:#e2e2e6"></div><div class="a" style="left:24px;top:48px;width:12px;height:12px;background:#fafafa"></div><div class="a" style="left:36px;top:48px;width:12px;height:12px;background:#f2f2f4"></div><div class="a" style="left:48px;top:48px;width:12px;height:12px;background:#f2f2f4"></div><div class="a" style="left:60px;top:48px;width:12px;height:12px;background:#eeeef0"></div><div class="a" style="left:72px;top:48px;width:12px;height:12px;background:#eeeef0"></div><div class="a" style="left:84px;top:48px;width:12px;height:12px;background:#eeeef0"></div><div class="a" style="left:96px;top:48px;width:12px;height:12px;background:#f2f2f4"></div><div class="a" style="left:108px;top:48px;width:12px;height:12px;background:#e2e2e6"></div><div class="a" style="left:120px;top:48px;width:12px;height:12px;background:#eaeaec"></div><div class="a" style="left:132px;top:48px;width:12px;height:12px;background:#eaeaec"></div><div class="a" style="left:144px;top:48px;width:12px;height:12px;background:#e2e2e6"></div><div class="a" style="left:156px;top:48px;width:12px;height:12px;background:#eaeaec"></div><div class="a" style="left:168px;top:48px;width:12px;height:12px;background:#eeeef0"></div><div class="a" style="left:180px;top:48px;width:12px;height:12px;background:#e6e6ea"></div><div class="a" style="left:192px;top:48px;width:12px;height:12px;background:#f6f6f8"></div><div class="a" style="left:204px;top:48px;width:12px;height:12px;background:#f2f2f4"></div><div class="a" style="left:216px;top:48px;width:12px;height:12px;background:#f6f6f8"></div><div class="a" style="left:228px;top:48px;width:12px;height:12px;background:#e2e2e6"></div><div class="a" style="left:240px;top:48px;width:12px;height:12px;background:#e6e6ea"></div><div class="a" style="left:252px;top:48px;width:12px;height:12px;background:#f2f2f4"></div><div class="a" style="left:264px;top:48px;width:12px;height:12px;background:#fafafa"></div><div class="a" style="left:276px;top:48px;width:12px;height:12px;background:#e6e6ea"></div><div class="a" style="left:288px;top:48px;width:12px;height:12px;background:#e6e6ea"></div><div class="a" style="left:300px;top:48px;width:12px;height:12px;background:#eaeaec"></div><div class="a" style="left:312px;top:48px;width:12px;height:12px;background:#e2e2e6"></div><div class="a" style="left:324px;top:48px;width:12px;height:12px;background:#eeeef0"></div><div class="a" style="left:336px;top:48px;width:12px;height:12px;background:#e2e2e6"></div><div class="a" style="left:348px;top:48px;width:12px;height:12px;background:#e6e6ea"></div><div class="a" style="left:360px;top:48px;width:12px;height:12px;background:#f6f6f8"></div><div class="a" style="left:372px;top:48px;width:12px;height:12px;background:#f2f2f4"></div><div class="a" style="left:384px;top:48px;width:12px;height:12px;background:#f6f6f8"></div><div class="a" style="left:396px;top:48px;width:12px;height:12px;background:#e2e2e6"></div><div class="a" style="left:408px;top:48px;width:12px;height:12px;background:#f6f6f8"></div><div class="a" style="left:420px;top:48px;width:12px;height:12px;background:#fafafa"></div><div class="a" style="left:432px;top:48px;width:12px;height:12px;background:#e6e6ea"></div><div class="a" style="left:444px;top:48px;width:12px;height:12px;background:#e6e6ea"></div><div class="a" style="left:456px;top:48px;width:12px;height:12px;background:#eeeef0"></div><div class="a" style="left:468px;top:48px;width:12px;height:12px;background:#e6e6ea"></div><div class="a" style="left:480px;top:48px;width:12px;height:12px;background:#eeeef0"></div><div class="a" style="left:492px;top:48px;width:12px;height:12px;background:#fafafa"></div><div class="a" style="left:504px;top:48px;width:12px;height:12px;background:#e2e2e6"></div><div class="a" style="left:516px;top:48px;width:12px;height:12px;background:#e6e6ea"></div><div class="a" style="left:528px;top:48px;width:12px;height:12px;background:#e2e2e6"></div><div class="a" style="left:540px;top:48px;width:12px;height:12px;background:#eeeef0"></div><div class="a" style="left:552px;top:48px;width:12px;height:12px;background:#e6e6ea"></div><div class="a" style="left:0px;top:60px;width:12px;height:12px;background:#e8e8ea"></div><div class="a" style="left:12px;top:60px;width:12px;height:12px;background:#d6d6da"></div><div class="a" style="left:24px;top:60px;width:12px;height:12px;background:#e8e8ea"></div><div class="a" style="left:36px;top:60px;width:12px;height:12px;background:#e4e4e6"></div><div class="a" style="left:48px;top:60px;width:12px;height:12px;background:#d6d6da"></div><div class="a" style="left:60px;top:60px;width:12px;height:12px;background:#e4e4e6"></div><div class="a" style="left:72px;top:60px;width:12px;height:12px;background:#e4e4e6"></div><div class="a" style="left:84px;top:60px;width:12px;height:12px;background:#e8e8ea"></div><div class="a" style="left:96px;top:60px;width:12px;height:12px;background:#e8e8ea"></div><div class="a" style="left:108px;top:60px;width:12px;height:12px;background:#e8e8ea"></div><div class="a" style="left:120px;top:60px;width:12px;height:12px;background:#e0e1e4"></div><div class="a" style="left:132px;top:60px;width:12px;height:12px;background:#d6d6da"></div><div class="a" style="left:144px;top:60px;width:12px;height:12px;background:#e8e8ea"></div><div class="a" style="left:156px;top:60px;width:12px;height:12px;background:#d6d6da"></div><div class="a" style="left:168px;top:60px;width:12px;height:12px;background:#e0e1e4"></div><div class="a" style="left:180px;top:60px;width:12px;height:12px;background:#d4d5d9"></div><div class="a" style="left:192px;top:60px;width:12px;height:12px;background:#f0f0f2"></div><div class="a" style="left:204px;top:60px;width:12px;height:12px;background:#e0e1e4"></div><div class="a" style="left:216px;top:60px;width:12px;height:12px;background:#f0f0f2"></div><div class="a" style="left:228px;top:60px;width:12px;height:12px;background:#f0f0f2"></div><div class="a" style="left:240px;top:60px;width:12px;height:12px;background:#d6d6da"></div><div class="a" style="left:252px;top:60px;width:12px;height:12px;background:#e8e8ea"></div><div class="a" style="left:264px;top:60px;width:12px;height:12px;background:#f0f0f2"></div><div class="a" style="left:276px;top:60px;width:12px;height:12px;background:#dcdce0"></div><div class="a" style="left:288px;top:60px;width:12px;height:12px;background:#e0e1e4"></div><div class="a" style="left:300px;top:60px;width:12px;height:12px;background:#e8e8ea"></div><div class="a" style="left:312px;top:60px;width:12px;height:12px;background:#e4e4e6"></div><div class="a" style="left:324px;top:60px;width:12px;height:12px;background:#e4e4e6"></div><div class="a" style="left:336px;top:60px;width:12px;height:12px;background:#e0e1e4"></div><div class="a" style="left:348px;top:60px;width:12px;height:12px;background:#e4e4e6"></div><div class="a" style="left:360px;top:60px;width:12px;height:12px;background:#e8e8ea"></div><div class="a" style="left:372px;top:60px;width:12px;height:12px;background:#e0e1e4"></div><div class="a" style="left:384px;top:60px;width:12px;height:12px;background:#ececee"></div><div class="a" style="left:396px;top:60px;width:12px;height:12px;background:#e0e1e4"></div><div class="a" style="left:408px;top:60px;width:12px;height:12px;background:#dcdce0"></div><div class="a" style="left:420px;top:60px;width:12px;height:12px;background:#dcdce0"></div><div class="a" style="left:432px;top:60px;width:12px;height:12px;background:#ececee"></div><div class="a" style="left:444px;top:60px;width:12px;height:12px;background:#d6d6da"></div><div class="a" style="left:456px;top:60px;width:12px;height:12px;background:#e8e8ea"></div><div class="a" style="left:468px;top:60px;width:12px;height:12px;background:#d6d6da"></div><div class="a" style="left:480px;top:60px;width:12px;height:12px;background:#e0e1e4"></div><div class="a" style="left:492px;top:60px;width:12px;height:12px;background:#e8e8ea"></div><div class="a" style="left:504px;top:60px;width:12px;height:12px;background:#d6d6da"></div><div class="a" style="left:516px;top:60px;width:12px;height:12px;background:#d6d6da"></div><div class="a" style="left:528px;top:60px;width:12px;height:12px;background:#d4d5d9"></div><div class="a" style="left:540px;top:60px;width:12px;height:12px;background:#e0e1e4"></div><div class="a" style="left:552px;top:60px;width:12px;height:12px;background:#dcdce0"></div></div>
<div class="a" style="left:1296px;top:590px;width:72px;height:84px;overflow:hidden;border-radius:10px 10px 14px 10px;"><div class="a" style="left:0px;top:0px;width:12px;height:12px;background:#eeeef0"></div><div class="a" style="left:12px;top:0px;width:12px;height:12px;background:#e2e2e6"></div><div class="a" style="left:24px;top:0px;width:12px;height:12px;background:#f6f6f8"></div><div class="a" style="left:36px;top:0px;width:12px;height:12px;background:#f2f2f4"></div><div class="a" style="left:48px;top:0px;width:12px;height:12px;background:#fafafa"></div><div class="a" style="left:60px;top:0px;width:12px;height:12px;background:#f2f2f4"></div><div class="a" style="left:0px;top:12px;width:12px;height:12px;background:#eaeaec"></div><div class="a" style="left:12px;top:12px;width:12px;height:12px;background:#f6f6f8"></div><div class="a" style="left:24px;top:12px;width:12px;height:12px;background:#f6f6f8"></div><div class="a" style="left:36px;top:12px;width:12px;height:12px;background:#f6f6f8"></div><div class="a" style="left:48px;top:12px;width:12px;height:12px;background:#e6e6ea"></div><div class="a" style="left:60px;top:12px;width:12px;height:12px;background:#eaeaec"></div><div class="a" style="left:0px;top:24px;width:12px;height:12px;background:#f0f0f2"></div><div class="a" style="left:12px;top:24px;width:12px;height:12px;background:#e8e8ea"></div><div class="a" style="left:24px;top:24px;width:12px;height:12px;background:#e4e4e6"></div><div class="a" style="left:36px;top:24px;width:12px;height:12px;background:#dcdce0"></div><div class="a" style="left:48px;top:24px;width:12px;height:12px;background:#dcdce0"></div><div class="a" style="left:60px;top:24px;width:12px;height:12px;background:#e8e8ea"></div><div class="a" style="left:0px;top:36px;width:12px;height:12px;background:#d6d6da"></div><div class="a" style="left:12px;top:36px;width:12px;height:12px;background:#f0f0f2"></div><div class="a" style="left:24px;top:36px;width:12px;height:12px;background:#ececee"></div><div class="a" style="left:36px;top:36px;width:12px;height:12px;background:#e4e4e6"></div><div class="a" style="left:48px;top:36px;width:12px;height:12px;background:#e4e4e6"></div><div class="a" style="left:60px;top:36px;width:12px;height:12px;background:#f0f0f2"></div><div class="a" style="left:0px;top:48px;width:12px;height:12px;background:#eeeef0"></div><div class="a" style="left:12px;top:48px;width:12px;height:12px;background:#e6e6ea"></div><div class="a" style="left:24px;top:48px;width:12px;height:12px;background:#eeeef0"></div><div class="a" style="left:36px;top:48px;width:12px;height:12px;background:#f2f2f4"></div><div class="a" style="left:48px;top:48px;width:12px;height:12px;background:#e6e6ea"></div><div class="a" style="left:60px;top:48px;width:12px;height:12px;background:#fafafa"></div><div class="a" style="left:0px;top:60px;width:12px;height:12px;background:#c2c2c6"></div><div class="a" style="left:12px;top:60px;width:12px;height:12px;background:#e2e2e4"></div><div class="a" style="left:24px;top:60px;width:12px;height:12px;background:#cacace"></div><div class="a" style="left:36px;top:60px;width:12px;height:12px;background:#cfcfd3"></div><div class="a" style="left:48px;top:60px;width:12px;height:12px;background:#d4d4d8"></div><div class="a" style="left:60px;top:60px;width:12px;height:12px;background:#e2e2e4"></div><div class="a" style="left:0px;top:72px;width:12px;height:12px;background:#fafafa"></div><div class="a" style="left:12px;top:72px;width:12px;height:12px;background:#fafafa"></div><div class="a" style="left:24px;top:72px;width:12px;height:12px;background:#eaeaec"></div><div class="a" style="left:36px;top:72px;width:12px;height:12px;background:#eaeaec"></div><div class="a" style="left:48px;top:72px;width:12px;height:12px;background:#f2f2f4"></div><div class="a" style="left:60px;top:72px;width:12px;height:12px;background:#e2e2e6"></div></div>
<div class="a" style="left:1296px;top:710px;width:72px;height:48px;overflow:hidden;border-radius:10px 14px 14px 14px;"><div class="a" style="left:0px;top:0px;width:12px;height:12px;background:#e2e2e6"></div><div class="a" style="left:12px;top:0px;width:12px;height:12px;background:#fafafa"></div><div class="a" style="left:24px;top:0px;width:12px;height:12px;background:#eeeef0"></div><div class="a" style="left:36px;top:0px;width:12px;height:12px;background:#fafafa"></div><div class="a" style="left:48px;top:0px;width:12px;height:12px;background:#f6f6f8"></div><div class="a" style="left:60px;top:0px;width:12px;height:12px;background:#eeeef0"></div><div class="a" style="left:0px;top:12px;width:12px;height:12px;background:#eaeaec"></div><div class="a" style="left:12px;top:12px;width:12px;height:12px;background:#e6e6ea"></div><div class="a" style="left:24px;top:12px;width:12px;height:12px;background:#e2e2e6"></div><div class="a" style="left:36px;top:12px;width:12px;height:12px;background:#eaeaec"></div><div class="a" style="left:48px;top:12px;width:12px;height:12px;background:#fafafa"></div><div class="a" style="left:60px;top:12px;width:12px;height:12px;background:#f6f6f8"></div><div class="a" style="left:0px;top:24px;width:12px;height:12px;background:#d6d6da"></div><div class="a" style="left:12px;top:24px;width:12px;height:12px;background:#f0f0f2"></div><div class="a" style="left:24px;top:24px;width:12px;height:12px;background:#e8e8ea"></div><div class="a" style="left:36px;top:24px;width:12px;height:12px;background:#d6d6da"></div><div class="a" style="left:48px;top:24px;width:12px;height:12px;background:#e0e1e4"></div><div class="a" style="left:60px;top:24px;width:12px;height:12px;background:#e4e4e6"></div><div class="a" style="left:0px;top:36px;width:12px;height:12px;background:#eaeaec"></div><div class="a" style="left:12px;top:36px;width:12px;height:12px;background:#f6f6f8"></div><div class="a" style="left:24px;top:36px;width:12px;height:12px;background:#f2f2f4"></div><div class="a" style="left:36px;top:36px;width:12px;height:12px;background:#f2f2f4"></div><div class="a" style="left:48px;top:36px;width:12px;height:12px;background:#eaeaec"></div><div class="a" style="left:60px;top:36px;width:12px;height:12px;background:#e2e2e6"></div></div>
<div class="t" style="left:1335px;top:665px;font-family:'Liberation Mono',monospace;font-size:11.8px;color:#343741;transform:scaleY(1.14);transform-origin:0 60%">_pr</div>
<svg class="a" style="left:1258px;top:715px" width="14" height="14" viewBox="0 0 14 14"><circle cx="5.8" cy="5.8" r="4.5" fill="none" stroke="#343741" stroke-width="1.6"/><path d="M9 9l4 4" stroke="#343741" stroke-width="1.8"/><path d="M3.6 5.8h4.4M5.8 3.6v4.4" stroke="#343741" stroke-width="1.3"/></svg>
<svg class="a" style="left:1279px;top:715px" width="14" height="14" viewBox="0 0 14 14"><circle cx="5.8" cy="5.8" r="4.5" fill="none" stroke="#343741" stroke-width="1.6"/><path d="M9 9l4 4" stroke="#343741" stroke-width="1.8"/><path d="M3.6 5.8h4.4" stroke="#343741" stroke-width="1.3"/></svg>
<div class="a" style="left:204px;top:783px;width:1179px;height:46px;background:#ededed"></div>
<div class="a" style="left:228px;top:794px;width:12px;height:12px;background:#acacac"></div>
<div class="a" style="left:240px;top:794px;width:12px;height:12px;background:#b4b4b4"></div>
<div class="a" style="left:252px;top:794px;width:12px;height:12px;background:#a6a6a2"></div>
<div class="a" style="left:264px;top:794px;width:12px;height:12px;background:#a9adae"></div>
<div class="a" style="left:276px;top:794px;width:12px;height:12px;background:#a8a6a4"></div>
<div class="a" style="left:288px;top:794px;width:12px;height:12px;background:#a4a8a8"></div>
<div class="a" style="left:300px;top:794px;width:12px;height:12px;background:#bcbab6"></div>
<div class="a" style="left:312px;top:794px;width:12px;height:12px;background:#a6aaaa"></div>
<div class="a" style="left:324px;top:794px;width:12px;height:12px;background:#b0b2b2"></div>
<div class="a" style="left:336px;top:794px;width:12px;height:12px;background:#c0c0bc"></div>
<div class="a" style="left:348px;top:794px;width:12px;height:12px;background:#a2a4a4"></div>
<div class="a" style="left:360px;top:794px;width:12px;height:12px;background:#b0b2b4"></div>
<div class="a" style="left:372px;top:794px;width:12px;height:12px;background:#bab6b2"></div>
<div class="a" style="left:384px;top:794px;width:12px;height:12px;background:#9a9ca0"></div>
<div class="a" style="left:228px;top:790px;width:168px;height:4px;background:linear-gradient(90deg,#ececec,#e2e2e2,#e6e6e6,#ececec)"></div>
<div class="t" style="left:1288px;top:804px;font-size:14px;color:#c6c6c6">@51CTO博客</div>
<div class="a" style="left:0;top:38px;width:3px;height:102px;background:#0d3a5a"></div>
<div class="a" style="left:0;top:140px;width:3px;height:325px;background:#06131c"></div>
<div class="a" style="left:0;top:465px;width:3px;height:364px;background:#0b3a5a"></div>
<div class="a" style="left:0;top:827px;width:1383px;height:2px;background:#fff"></div>
<div class="a" style="left:3px;top:0;width:1px;height:829px;background:#3a8ad8"></div>
</body></html>
